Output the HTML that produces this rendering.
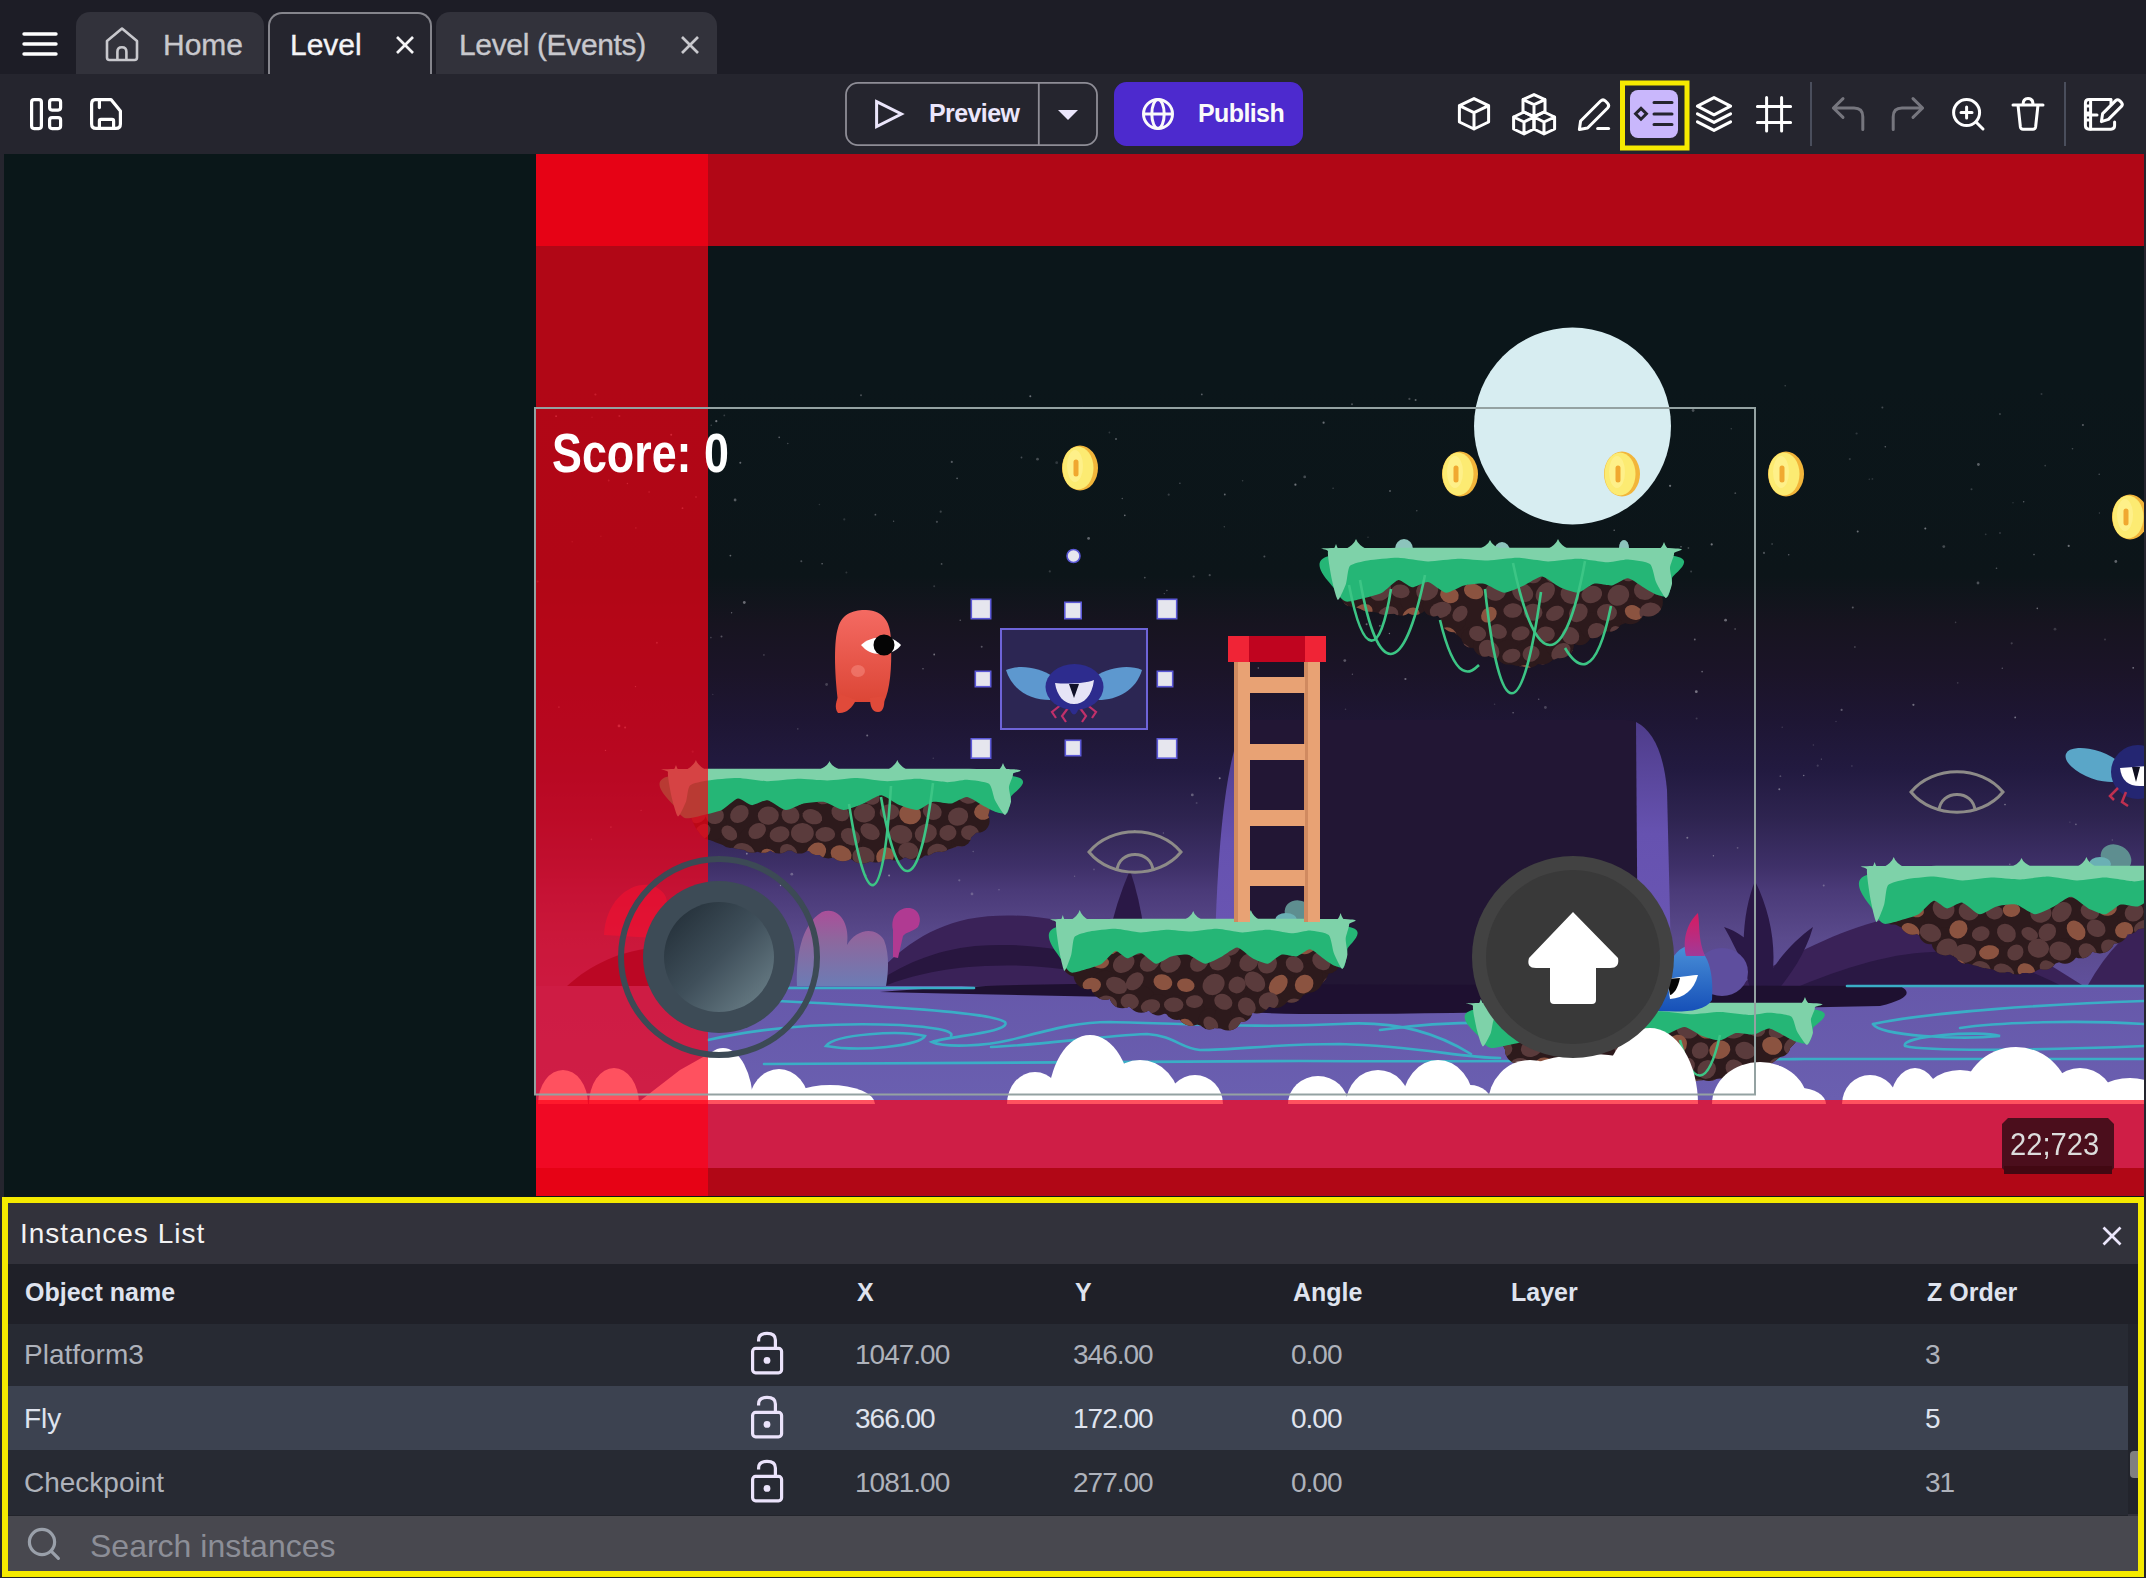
<!DOCTYPE html>
<html><head><meta charset="utf-8">
<style>
*{margin:0;padding:0;box-sizing:border-box}
html,body{width:2146px;height:1578px;overflow:hidden;background:#25252e;font-family:"Liberation Sans",sans-serif}
.a{position:absolute}
#tabbar{left:0;top:0;width:2146px;height:74px;background:#1d1d26}
.tab{position:absolute;top:12px;height:62px;background:#32323b;border-radius:14px 14px 0 0}
.tabt{position:absolute;font-size:30px;color:#c8c8cd;white-space:nowrap;line-height:1;-webkit-text-stroke:0.35px currentColor}
#toolbar{left:0;top:74px;width:2146px;height:80px;background:#25252e}
#scene{left:4px;top:154px;width:2140px;height:1043px;background:#0a1719;overflow:hidden}
#panel{left:2px;top:1197px;width:2142px;height:380px;border:6px solid #f5ea00;background:#32323b}
.ptxt{position:absolute;white-space:nowrap;line-height:1}
</style></head><body>
<!-- TAB BAR -->
<div id="tabbar" class="a">
  <svg class="a" style="left:0;top:0" width="80" height="74"><g stroke="#fff" stroke-width="3.4" stroke-linecap="round"><line x1="24" y1="34" x2="56" y2="34"/><line x1="24" y1="44" x2="56" y2="44"/><line x1="24" y1="54" x2="56" y2="54"/></g></svg>
  <div class="tab" style="left:76px;width:188px"></div>
  <div class="tab" style="left:268px;width:164px;background:#25252e;border:2px solid #85858c;border-bottom:none"></div>
  <div class="tab" style="left:436px;width:281px"></div>
  <svg class="a" style="left:100px;top:22px" width="44" height="44" viewBox="0 0 44 44"><path d="M22 6.5 L37 19 V35.5 Q37 38 34.5 38 H9.5 Q7 38 7 35.5 V19 Z M17.4 38 V29.8 Q17.4 25.2 21.9 25.2 Q26.4 25.2 26.4 29.8 V38" fill="none" stroke="#c8c8cd" stroke-width="2.6" stroke-linejoin="round"/></svg>
  <div class="tabt" style="left:163px;top:30px">Home</div>
  <div class="tabt" style="left:290px;top:30px;color:#f4f4f6">Level</div>
  <svg class="a" style="left:396px;top:36px" width="18" height="18"><g stroke="#f4f4f6" stroke-width="2.6"><line x1="1" y1="1" x2="17" y2="17"/><line x1="17" y1="1" x2="1" y2="17"/></g></svg>
  <div class="tabt" style="left:459px;top:30px;letter-spacing:-0.35px">Level (Events)</div>
  <svg class="a" style="left:681px;top:36px" width="18" height="18"><g stroke="#c8c8cd" stroke-width="2.6"><line x1="1" y1="1" x2="17" y2="17"/><line x1="17" y1="1" x2="1" y2="17"/></g></svg>
</div>
<!-- TOOLBAR -->
<div id="toolbar" class="a">
  <svg class="a" style="left:0;top:0" width="2146" height="80" viewBox="0 74 2146 80">
   <g fill="none" stroke="#fff" stroke-width="3.2" stroke-linejoin="round" stroke-linecap="round">
    <!-- layout -->
    <rect x="31.6" y="99.6" width="9.8" height="29" rx="2.5"/>
    <rect x="49.6" y="99.6" width="11" height="10.5" rx="2.5"/>
    <rect x="49.6" y="117.6" width="11" height="11" rx="2.5"/>
    <!-- save -->
    <path d="M95 99.6 H111 L120.4 111 V124 Q120.4 128.4 116 128.4 H96 Q91.6 128.4 91.6 124 V104 Q91.6 99.6 95 99.6 Z"/>
    <path d="M99.4 100 V107.6"/>
    <path d="M99.4 128 V121 Q99.4 119.4 101 119.4 H112 Q113.6 119.4 113.6 121 V128"/>
   </g>
   <!-- preview button -->
   <rect x="846" y="82.8" width="251" height="62.4" rx="12" fill="none" stroke="#8e8d96" stroke-width="1.8"/>
   <line x1="1038.8" y1="83" x2="1038.8" y2="145" stroke="#8e8d96" stroke-width="1.8"/>
   <path d="M876.6 101.6 L901.4 114 L876.6 126.6 Z" fill="none" stroke="#ebe6fb" stroke-width="3" stroke-linejoin="miter"/>
   <path d="M1058 110 H1078 L1068 120 Z" fill="#ebe6fb"/>
   <!-- publish -->
   <rect x="1114" y="82" width="189" height="64" rx="12.5" fill="#4d2ace"/>
   <g fill="none" stroke="#fafafa" stroke-width="3">
    <circle cx="1158" cy="114" r="14.5"/>
    <ellipse cx="1158" cy="114" rx="6.2" ry="14.5"/>
    <line x1="1143.5" y1="114" x2="1172.5" y2="114"/>
   </g>
   <!-- right icons -->
   <g fill="none" stroke="#fff" stroke-width="3" stroke-linejoin="round" stroke-linecap="round">
    <!-- cube -->
    <path d="M1474 98.6 L1488.6 105.6 V122 L1474 129 L1459.4 122 V105.6 Z M1459.4 105.6 L1474 112.6 L1488.6 105.6 M1474 112.6 V129"/>
    <!-- cubes -->
    <path d="M1534 94.6 L1545 99.6 V111.6 L1534 116.6 L1523 111.6 V99.6 Z M1523 99.6 L1534 104.6 L1545 99.6 M1534 104.6 V116.6"/>
    <path d="M1524 112 L1534 117 V129 L1524 134 L1513.6 129 V117 Z M1513.6 117 L1524 122 L1534 117 M1524 122 V133.6"/>
    <path d="M1544 112 L1554.6 117 V129 L1544 134 L1534 129 V117 Z M1534 117 L1544 122 L1554.6 117 M1544 122 V133.6"/>
    <!-- pencil -->
    <path d="M1579.4 129.4 L1580.6 121 L1600.6 101 Q1603 98.8 1605.4 101 L1607.6 103.2 Q1609.8 105.6 1607.6 108 L1587.6 128 Z"/>
    <line x1="1597.6" y1="128.4" x2="1608.6" y2="128.4"/>
    <!-- layers -->
    <path d="M1714 97.6 L1730.6 106.2 L1714 114.8 L1697.4 106.2 Z"/>
    <path d="M1697.4 113.8 L1714 122.4 L1730.6 113.8"/>
    <path d="M1697.4 121.8 L1714 130.4 L1730.6 121.8"/>
    <!-- grid -->
    <path d="M1766.6 97.6 V131 M1781.6 97.6 V131 M1757.4 106.4 V106.4 M1757.4 106.4 H1790.6 M1757.4 122.4 H1790.6"/>
    <!-- zoom -->
    <circle cx="1966.6" cy="112.6" r="13"/>
    <path d="M1976 122 L1983 129 M1961 112.6 H1972 M1966.6 107 V118"/>
    <!-- trash -->
    <path d="M2013 105 H2043 M2018 105 L2020.4 127 Q2020.8 129.2 2023 129.2 H2033 Q2035.2 129.2 2035.6 127 L2038 105 M2023 104.6 Q2023 98.4 2028 98.4 Q2033 98.4 2033 104.6"/>
    <!-- edit -->
    <path d="M2110.6 99.4 H2089 Q2085.4 99.4 2085.4 103 V125.6 Q2085.4 129.2 2089 129.2 H2111 Q2114.6 129.2 2114.6 125.6 V122"/>
    <path d="M2090.6 99.6 V129 M2085.6 106 H2090.6 M2085.6 113 H2090.6 M2085.6 120 H2090.6 M2086 115 H2097 M2111 99.6 V104"/>
    <path d="M2101.4 121.6 L2102.6 113.6 L2115.6 100.6 Q2117.6 98.8 2119.6 100.6 L2121.4 102.4 Q2123.2 104.4 2121.4 106.4 L2108.4 119.4 Z"/>
   </g>
   <!-- highlight -->
   <rect x="1630" y="90" width="48" height="48" rx="8" fill="#c9b7fc"/>
   <rect x="1622.5" y="83" width="64.5" height="65" fill="none" stroke="#f6ea00" stroke-width="5"/>
   <g fill="none" stroke="#25252e" stroke-width="3" stroke-linecap="round">
    <path d="M1641 108.4 L1646.4 113.8 L1641 119.2 L1635.6 113.8 Z" stroke-linejoin="miter"/>
    <path d="M1654 102.6 H1672 M1654 114 H1672 M1654 124.6 H1672"/>
   </g>
   <!-- separators -->
   <rect x="1810" y="82" width="2" height="64" fill="#4a4e5c"/>
   <rect x="2064" y="82" width="2" height="64" fill="#4a4e5c"/>
   <g fill="none" stroke="#76767e" stroke-width="3" stroke-linecap="round" stroke-linejoin="round">
    <path d="M1843 98.6 L1833.4 108 L1843 117.4 M1833.4 108 H1854 Q1862.8 108 1862.8 116.8 V129.4"/>
    <path d="M1913 98.6 L1922.6 108 L1913 117.4 M1922.6 108 H1902 Q1893.2 108 1893.2 116.8 V129.4"/>
   </g>
  </svg>
  <div class="ptxt" style="left:929px;top:27px;font-size:25px;letter-spacing:-0.6px;font-weight:bold;color:#ebe6fb">Preview</div>
  <div class="ptxt" style="left:1198px;top:27px;font-size:25px;letter-spacing:-0.6px;font-weight:bold;color:#fafafa">Publish</div>
</div>
<!-- SCENE -->
<div id="scene" class="a">
<svg class="a" style="left:0;top:0" width="2140" height="1043" viewBox="4 154 2140 1043">
<defs>
<linearGradient id="sky" x1="0" y1="385" x2="0" y2="1000" gradientUnits="userSpaceOnUse">
 <stop offset="0" stop-color="#0b161a"/>
 <stop offset="0.31" stop-color="#0c1519"/>
 <stop offset="0.39" stop-color="#171420"/>
 <stop offset="0.468" stop-color="#1b1428"/>
 <stop offset="0.548" stop-color="#1e1634"/>
 <stop offset="0.626" stop-color="#221a40"/>
 <stop offset="0.704" stop-color="#2e2450"/>
 <stop offset="0.782" stop-color="#3e3068"/>
 <stop offset="0.821" stop-color="#4a3a78"/>
 <stop offset="0.899" stop-color="#5a4a8c"/>
 <stop offset="1" stop-color="#6252a0"/>
</linearGradient>
<linearGradient id="water" x1="0" y1="986" x2="0" y2="1100" gradientUnits="userSpaceOnUse">
 <stop offset="0" stop-color="#6658aa"/><stop offset="1" stop-color="#6a5fb0"/>
</linearGradient>
<linearGradient id="joy" x1="0" y1="0" x2="1" y2="1">
 <stop offset="0" stop-color="#1f2a33"/><stop offset="0.5" stop-color="#3f4f5a"/><stop offset="1" stop-color="#70858e"/>
</linearGradient>
<linearGradient id="wf" x1="0" y1="0" x2="0" y2="1">
 <stop offset="0" stop-color="#4e3c8a"/><stop offset="0.4" stop-color="#6652b0"/><stop offset="1" stop-color="#6c58b4"/>
</linearGradient>
</defs>
<rect x="4" y="154" width="2140" height="1043" fill="#0a1719"/>
<rect x="536" y="246" width="1608" height="950" fill="#0b161a"/>
<rect x="536" y="385" width="1608" height="620" fill="url(#sky)"/>
<g fill="#c8c8d0"><circle cx="1056.7" cy="462.7" r="1.4" fill-opacity="0.20"/><circle cx="1856.6" cy="433.5" r="1.1" fill-opacity="0.20"/><circle cx="1352.0" cy="404.3" r="1.0" fill-opacity="0.33"/><circle cx="923.0" cy="668.8" r="0.7" fill-opacity="0.49"/><circle cx="735.1" cy="500.0" r="1.4" fill-opacity="0.40"/><circle cx="635.5" cy="686.6" r="0.7" fill-opacity="0.54"/><circle cx="610.9" cy="827.1" r="0.9" fill-opacity="0.34"/><circle cx="1405.4" cy="679.0" r="1.1" fill-opacity="0.48"/><circle cx="826.6" cy="684.5" r="1.4" fill-opacity="0.25"/><circle cx="692.7" cy="751.7" r="1.1" fill-opacity="0.20"/><circle cx="867.2" cy="735.4" r="1.0" fill-opacity="0.47"/><circle cx="1284.7" cy="860.6" r="0.9" fill-opacity="0.29"/><circle cx="1813.4" cy="745.0" r="0.8" fill-opacity="0.21"/><circle cx="1018.8" cy="640.0" r="0.9" fill-opacity="0.45"/><circle cx="999.0" cy="889.8" r="0.7" fill-opacity="0.37"/><circle cx="801.3" cy="561.2" r="1.0" fill-opacity="0.34"/><circle cx="2082.9" cy="425.0" r="1.1" fill-opacity="0.39"/><circle cx="1943.8" cy="546.6" r="1.4" fill-opacity="0.31"/><circle cx="1334.7" cy="795.4" r="0.7" fill-opacity="0.49"/><circle cx="2055.0" cy="629.2" r="1.4" fill-opacity="0.20"/><circle cx="1711.7" cy="544.4" r="1.1" fill-opacity="0.55"/><circle cx="1857.7" cy="531.6" r="1.0" fill-opacity="0.51"/><circle cx="1094.0" cy="869.4" r="0.9" fill-opacity="0.24"/><circle cx="724.3" cy="415.4" r="0.9" fill-opacity="0.23"/><circle cx="934.2" cy="586.3" r="1.0" fill-opacity="0.21"/><circle cx="1258.3" cy="668.0" r="0.8" fill-opacity="0.48"/><circle cx="1925.3" cy="528.4" r="1.0" fill-opacity="0.54"/><circle cx="1633.8" cy="580.9" r="0.8" fill-opacity="0.24"/><circle cx="819.4" cy="504.5" r="0.8" fill-opacity="0.18"/><circle cx="1872.4" cy="478.9" r="0.9" fill-opacity="0.18"/><circle cx="1209.7" cy="575.2" r="1.1" fill-opacity="0.30"/><circle cx="737.8" cy="827.5" r="1.1" fill-opacity="0.42"/><circle cx="1725.6" cy="620.2" r="1.4" fill-opacity="0.48"/><circle cx="1166.9" cy="590.5" r="0.7" fill-opacity="0.36"/><circle cx="1179.9" cy="483.2" r="0.8" fill-opacity="0.34"/><circle cx="712.8" cy="694.4" r="0.7" fill-opacity="0.18"/><circle cx="779.2" cy="437.3" r="0.9" fill-opacity="0.41"/><circle cx="649.1" cy="492.1" r="1.0" fill-opacity="0.23"/><circle cx="941.6" cy="563.9" r="0.9" fill-opacity="0.36"/><circle cx="721.5" cy="636.4" r="1.0" fill-opacity="0.36"/><circle cx="1037.5" cy="459.2" r="1.4" fill-opacity="0.31"/><circle cx="961.7" cy="811.9" r="0.8" fill-opacity="0.37"/><circle cx="866.0" cy="875.3" r="0.9" fill-opacity="0.23"/><circle cx="1409.4" cy="398.9" r="1.1" fill-opacity="0.29"/><circle cx="1569.8" cy="431.9" r="0.9" fill-opacity="0.37"/><circle cx="1996.5" cy="568.2" r="0.8" fill-opacity="0.38"/><circle cx="1788.7" cy="554.8" r="0.8" fill-opacity="0.41"/><circle cx="1803.7" cy="775.5" r="0.8" fill-opacity="0.48"/><circle cx="1851.9" cy="766.0" r="0.8" fill-opacity="0.25"/><circle cx="1328.4" cy="761.5" r="0.7" fill-opacity="0.47"/><circle cx="1295.4" cy="484.7" r="1.1" fill-opacity="0.53"/><circle cx="1255.1" cy="867.6" r="0.9" fill-opacity="0.53"/><circle cx="1122.3" cy="498.5" r="0.8" fill-opacity="0.35"/><circle cx="1079.1" cy="633.6" r="1.1" fill-opacity="0.49"/><circle cx="1307.0" cy="721.3" r="1.4" fill-opacity="0.21"/><circle cx="1598.2" cy="853.5" r="1.4" fill-opacity="0.46"/><circle cx="1304.7" cy="476.9" r="1.4" fill-opacity="0.30"/><circle cx="1823.7" cy="885.4" r="1.0" fill-opacity="0.35"/><circle cx="1731.3" cy="428.7" r="0.8" fill-opacity="0.24"/><circle cx="740.3" cy="462.8" r="1.0" fill-opacity="0.48"/><circle cx="771.0" cy="810.7" r="1.0" fill-opacity="0.42"/><circle cx="1099.5" cy="667.6" r="0.8" fill-opacity="0.19"/><circle cx="1821.4" cy="759.1" r="0.7" fill-opacity="0.37"/><circle cx="2037.3" cy="608.4" r="0.8" fill-opacity="0.49"/><circle cx="875.4" cy="514.7" r="0.9" fill-opacity="0.37"/><circle cx="1764.0" cy="552.9" r="1.1" fill-opacity="0.34"/><circle cx="746.8" cy="853.7" r="0.9" fill-opacity="0.51"/><circle cx="1601.3" cy="804.7" r="1.1" fill-opacity="0.34"/><circle cx="2011.7" cy="643.3" r="1.1" fill-opacity="0.24"/><circle cx="1357.0" cy="834.5" r="0.8" fill-opacity="0.41"/><circle cx="1783.9" cy="462.1" r="0.8" fill-opacity="0.36"/><circle cx="1702.1" cy="671.6" r="0.9" fill-opacity="0.43"/><circle cx="1389.4" cy="633.5" r="0.7" fill-opacity="0.51"/><circle cx="627.4" cy="483.5" r="0.7" fill-opacity="0.47"/><circle cx="1352.4" cy="674.3" r="0.7" fill-opacity="0.34"/><circle cx="1520.9" cy="645.4" r="1.1" fill-opacity="0.25"/><circle cx="981.7" cy="646.7" r="1.0" fill-opacity="0.37"/><circle cx="934.2" cy="654.5" r="0.9" fill-opacity="0.52"/><circle cx="1971.5" cy="489.3" r="1.0" fill-opacity="0.23"/><circle cx="731.6" cy="612.7" r="0.7" fill-opacity="0.43"/><circle cx="1224.8" cy="494.5" r="0.9" fill-opacity="0.47"/><circle cx="1978.4" cy="464.5" r="1.4" fill-opacity="0.42"/><circle cx="1124.8" cy="515.4" r="0.8" fill-opacity="0.54"/><circle cx="889.1" cy="875.5" r="1.0" fill-opacity="0.51"/><circle cx="797.8" cy="728.9" r="0.8" fill-opacity="0.24"/><circle cx="1229.9" cy="650.5" r="0.9" fill-opacity="0.34"/><circle cx="1109.4" cy="432.5" r="0.9" fill-opacity="0.19"/><circle cx="1426.9" cy="611.8" r="0.7" fill-opacity="0.32"/><circle cx="1368.0" cy="537.2" r="0.7" fill-opacity="0.22"/><circle cx="2013.0" cy="502.7" r="0.7" fill-opacity="0.21"/><circle cx="973.2" cy="851.5" r="0.8" fill-opacity="0.28"/><circle cx="744.3" cy="602.5" r="1.4" fill-opacity="0.48"/><circle cx="951.8" cy="461.9" r="1.1" fill-opacity="0.39"/><circle cx="1662.3" cy="431.1" r="0.7" fill-opacity="0.48"/><circle cx="830.8" cy="846.1" r="0.9" fill-opacity="0.53"/><circle cx="1556.2" cy="797.8" r="0.7" fill-opacity="0.41"/><circle cx="893.6" cy="521.2" r="0.7" fill-opacity="0.35"/><circle cx="1081.4" cy="669.8" r="0.9" fill-opacity="0.41"/><circle cx="605.5" cy="750.4" r="0.7" fill-opacity="0.54"/><circle cx="957.1" cy="478.3" r="0.9" fill-opacity="0.41"/><circle cx="1390.0" cy="491.0" r="1.0" fill-opacity="0.37"/><circle cx="822.1" cy="563.7" r="0.7" fill-opacity="0.55"/><circle cx="595.4" cy="394.5" r="1.1" fill-opacity="0.38"/><circle cx="840.6" cy="629.5" r="1.0" fill-opacity="0.22"/><circle cx="1852.8" cy="607.6" r="1.0" fill-opacity="0.38"/><circle cx="1965.1" cy="884.7" r="0.9" fill-opacity="0.43"/><circle cx="2115.8" cy="561.5" r="1.4" fill-opacity="0.45"/><circle cx="760.7" cy="894.6" r="0.7" fill-opacity="0.49"/><circle cx="558.9" cy="707.1" r="0.9" fill-opacity="0.34"/><circle cx="625.1" cy="727.6" r="1.0" fill-opacity="0.50"/><circle cx="1614.2" cy="530.2" r="0.8" fill-opacity="0.44"/><circle cx="608.7" cy="480.5" r="0.9" fill-opacity="0.34"/><circle cx="959.3" cy="880.3" r="1.1" fill-opacity="0.30"/><circle cx="591.4" cy="839.4" r="0.8" fill-opacity="0.31"/><circle cx="537.7" cy="581.5" r="1.0" fill-opacity="0.28"/><circle cx="1590.9" cy="512.8" r="0.7" fill-opacity="0.21"/><circle cx="1849.8" cy="459.1" r="1.1" fill-opacity="0.20"/><circle cx="572.2" cy="541.7" r="0.8" fill-opacity="0.21"/><circle cx="2075.9" cy="824.4" r="0.8" fill-opacity="0.42"/><circle cx="1687.3" cy="837.7" r="1.0" fill-opacity="0.46"/><circle cx="1694.8" cy="639.5" r="0.9" fill-opacity="0.45"/><circle cx="1570.3" cy="407.6" r="1.4" fill-opacity="0.51"/><circle cx="1544.8" cy="762.9" r="1.1" fill-opacity="0.23"/><circle cx="1378.2" cy="644.8" r="0.7" fill-opacity="0.49"/><circle cx="1475.2" cy="844.8" r="1.4" fill-opacity="0.53"/><circle cx="1569.8" cy="428.8" r="0.7" fill-opacity="0.23"/><circle cx="1116.0" cy="439.0" r="1.0" fill-opacity="0.39"/><circle cx="1545.4" cy="707.5" r="1.4" fill-opacity="0.27"/><circle cx="960.2" cy="620.3" r="0.7" fill-opacity="0.46"/><circle cx="1344.8" cy="660.6" r="1.4" fill-opacity="0.37"/><circle cx="1735.1" cy="629.0" r="0.7" fill-opacity="0.49"/><circle cx="913.5" cy="774.6" r="0.8" fill-opacity="0.45"/><circle cx="2105.0" cy="639.4" r="1.0" fill-opacity="0.21"/><circle cx="2000.0" cy="533.0" r="0.7" fill-opacity="0.41"/><circle cx="1569.6" cy="424.9" r="0.8" fill-opacity="0.30"/><circle cx="1583.7" cy="741.8" r="1.1" fill-opacity="0.39"/><circle cx="556.1" cy="416.2" r="0.9" fill-opacity="0.54"/><circle cx="696.0" cy="497.1" r="1.0" fill-opacity="0.29"/><circle cx="1366.6" cy="624.3" r="1.0" fill-opacity="0.46"/><circle cx="2133.2" cy="667.8" r="0.9" fill-opacity="0.54"/><circle cx="2041.5" cy="394.0" r="1.0" fill-opacity="0.21"/><circle cx="1350.6" cy="897.2" r="0.9" fill-opacity="0.32"/><circle cx="2009.8" cy="864.2" r="0.7" fill-opacity="0.40"/><circle cx="763.9" cy="654.9" r="0.9" fill-opacity="0.23"/><circle cx="1854.9" cy="647.0" r="0.7" fill-opacity="0.44"/><circle cx="908.1" cy="847.3" r="1.0" fill-opacity="0.33"/><circle cx="791.8" cy="874.2" r="1.4" fill-opacity="0.35"/><circle cx="1021.5" cy="457.5" r="0.9" fill-opacity="0.32"/><circle cx="730.4" cy="555.6" r="0.9" fill-opacity="0.46"/><circle cx="1885.3" cy="446.8" r="0.8" fill-opacity="0.44"/><circle cx="1985.7" cy="534.3" r="0.9" fill-opacity="0.20"/><circle cx="1163.4" cy="833.0" r="0.7" fill-opacity="0.31"/><circle cx="1224.3" cy="526.7" r="0.7" fill-opacity="0.28"/><circle cx="619.0" cy="725.9" r="1.4" fill-opacity="0.53"/><circle cx="936.9" cy="521.8" r="1.1" fill-opacity="0.30"/><circle cx="1779.3" cy="789.3" r="1.0" fill-opacity="0.51"/><circle cx="1841.6" cy="709.9" r="1.1" fill-opacity="0.38"/><circle cx="1693.1" cy="410.5" r="1.4" fill-opacity="0.33"/><circle cx="1524.8" cy="456.4" r="0.9" fill-opacity="0.36"/><circle cx="2002.3" cy="668.3" r="0.8" fill-opacity="0.35"/><circle cx="1088.6" cy="538.4" r="1.4" fill-opacity="0.45"/><circle cx="1585.7" cy="594.2" r="0.8" fill-opacity="0.29"/><circle cx="1432.2" cy="588.1" r="0.8" fill-opacity="0.42"/><circle cx="656.9" cy="642.8" r="1.0" fill-opacity="0.38"/><circle cx="1264.4" cy="556.4" r="1.0" fill-opacity="0.34"/><circle cx="1416.8" cy="510.7" r="0.8" fill-opacity="0.31"/><circle cx="682.5" cy="508.2" r="0.9" fill-opacity="0.48"/><circle cx="861.0" cy="395.3" r="1.0" fill-opacity="0.32"/><circle cx="1735.3" cy="493.2" r="0.9" fill-opacity="0.31"/><circle cx="635.8" cy="527.9" r="0.9" fill-opacity="0.23"/><circle cx="1345.5" cy="709.3" r="0.8" fill-opacity="0.21"/><circle cx="1978.0" cy="583.0" r="1.4" fill-opacity="0.34"/><circle cx="2069.9" cy="822.1" r="0.7" fill-opacity="0.23"/><circle cx="1219.7" cy="778.3" r="1.0" fill-opacity="0.54"/><circle cx="1323.6" cy="422.7" r="1.1" fill-opacity="0.50"/><circle cx="2099.4" cy="513.0" r="0.7" fill-opacity="0.26"/><circle cx="780.5" cy="885.5" r="0.7" fill-opacity="0.53"/><circle cx="1696.6" cy="718.4" r="1.0" fill-opacity="0.21"/><circle cx="1785.2" cy="385.7" r="0.8" fill-opacity="0.27"/><circle cx="2015.2" cy="717.4" r="0.9" fill-opacity="0.54"/><circle cx="1543.4" cy="657.1" r="1.0" fill-opacity="0.44"/><circle cx="716.3" cy="421.2" r="1.1" fill-opacity="0.53"/><circle cx="844.3" cy="519.4" r="1.1" fill-opacity="0.18"/><circle cx="1400.3" cy="898.1" r="0.9" fill-opacity="0.53"/><circle cx="1572.5" cy="840.1" r="1.0" fill-opacity="0.37"/><circle cx="1415.6" cy="400.1" r="1.0" fill-opacity="0.44"/><circle cx="1030.3" cy="396.2" r="1.0" fill-opacity="0.51"/><circle cx="1576.6" cy="426.8" r="0.8" fill-opacity="0.43"/><circle cx="2023.7" cy="501.8" r="0.7" fill-opacity="0.44"/><circle cx="1691.1" cy="571.6" r="1.0" fill-opacity="0.25"/><circle cx="1817.7" cy="765.7" r="1.1" fill-opacity="0.20"/><circle cx="1333.1" cy="488.2" r="0.8" fill-opacity="0.27"/><circle cx="892.1" cy="776.6" r="0.9" fill-opacity="0.22"/><circle cx="1538.7" cy="699.2" r="0.8" fill-opacity="0.36"/><circle cx="1999.9" cy="414.1" r="1.1" fill-opacity="0.23"/><circle cx="1168.7" cy="494.7" r="1.1" fill-opacity="0.23"/><circle cx="619.4" cy="416.0" r="1.0" fill-opacity="0.35"/><circle cx="1681.0" cy="546.8" r="0.7" fill-opacity="0.55"/><circle cx="2034.0" cy="554.6" r="0.8" fill-opacity="0.42"/><circle cx="1379.9" cy="625.8" r="0.9" fill-opacity="0.43"/><circle cx="1144.8" cy="577.6" r="0.9" fill-opacity="0.34"/><circle cx="711.2" cy="425.3" r="0.7" fill-opacity="0.31"/><circle cx="2072.5" cy="448.7" r="0.8" fill-opacity="0.32"/><circle cx="1772.1" cy="544.0" r="1.0" fill-opacity="0.21"/><circle cx="1670.1" cy="485.8" r="1.1" fill-opacity="0.52"/><circle cx="846.4" cy="572.6" r="1.0" fill-opacity="0.19"/><circle cx="1196.6" cy="803.1" r="1.0" fill-opacity="0.20"/><circle cx="592.0" cy="417.2" r="0.7" fill-opacity="0.28"/><circle cx="1737.6" cy="847.8" r="0.9" fill-opacity="0.31"/><circle cx="1074.6" cy="876.2" r="0.7" fill-opacity="0.28"/><circle cx="1688.4" cy="548.0" r="0.9" fill-opacity="0.29"/><circle cx="1696.3" cy="691.7" r="1.4" fill-opacity="0.53"/><circle cx="641.1" cy="810.4" r="0.7" fill-opacity="0.36"/><circle cx="2074.5" cy="876.3" r="1.0" fill-opacity="0.47"/><circle cx="2005.0" cy="804.6" r="0.8" fill-opacity="0.52"/><circle cx="830.2" cy="798.3" r="1.4" fill-opacity="0.29"/><circle cx="1648.9" cy="462.9" r="0.8" fill-opacity="0.30"/><circle cx="1049.8" cy="571.4" r="1.1" fill-opacity="0.21"/><circle cx="853.3" cy="772.7" r="0.8" fill-opacity="0.33"/><circle cx="1580.5" cy="633.1" r="1.1" fill-opacity="0.30"/><circle cx="2112.3" cy="840.0" r="0.7" fill-opacity="0.28"/><circle cx="671.2" cy="434.7" r="1.0" fill-opacity="0.55"/><circle cx="2099.2" cy="474.2" r="0.8" fill-opacity="0.33"/><circle cx="1533.5" cy="732.2" r="1.4" fill-opacity="0.38"/><circle cx="1780.4" cy="776.2" r="0.9" fill-opacity="0.29"/><circle cx="1447.5" cy="577.1" r="1.4" fill-opacity="0.28"/><circle cx="1242.6" cy="480.7" r="0.8" fill-opacity="0.24"/><circle cx="1957.7" cy="682.8" r="0.9" fill-opacity="0.20"/><circle cx="940.7" cy="511.7" r="1.1" fill-opacity="0.27"/><circle cx="1836.0" cy="721.5" r="0.7" fill-opacity="0.22"/><circle cx="1299.4" cy="806.8" r="1.0" fill-opacity="0.52"/><circle cx="600.9" cy="536.2" r="0.7" fill-opacity="0.20"/><circle cx="1501.6" cy="811.4" r="0.8" fill-opacity="0.52"/><circle cx="1134.6" cy="831.1" r="1.0" fill-opacity="0.40"/><circle cx="1782.2" cy="727.3" r="0.7" fill-opacity="0.22"/><circle cx="1494.6" cy="704.3" r="0.8" fill-opacity="0.19"/><circle cx="1082.7" cy="407.7" r="0.9" fill-opacity="0.19"/><circle cx="1713.4" cy="855.7" r="0.7" fill-opacity="0.48"/><circle cx="1193.7" cy="576.5" r="1.1" fill-opacity="0.30"/><circle cx="863.1" cy="794.6" r="1.1" fill-opacity="0.36"/><circle cx="1192.3" cy="794.9" r="1.4" fill-opacity="0.38"/><circle cx="1563.8" cy="431.9" r="0.8" fill-opacity="0.33"/><circle cx="972.0" cy="893.9" r="1.4" fill-opacity="0.29"/><circle cx="2068.7" cy="545.9" r="1.1" fill-opacity="0.51"/><circle cx="1201.8" cy="394.4" r="0.9" fill-opacity="0.42"/><circle cx="1164.3" cy="593.6" r="0.7" fill-opacity="0.34"/><circle cx="787.8" cy="443.5" r="0.7" fill-opacity="0.33"/><circle cx="1955.6" cy="622.4" r="0.8" fill-opacity="0.23"/><circle cx="619.1" cy="458.4" r="1.0" fill-opacity="0.21"/><circle cx="1536.5" cy="576.0" r="1.1" fill-opacity="0.24"/><circle cx="1095.5" cy="468.3" r="0.8" fill-opacity="0.52"/><circle cx="710.9" cy="637.6" r="0.8" fill-opacity="0.29"/><circle cx="1882.4" cy="407.4" r="1.0" fill-opacity="0.30"/><circle cx="1513.1" cy="712.7" r="0.7" fill-opacity="0.51"/><circle cx="1533.5" cy="809.6" r="0.8" fill-opacity="0.42"/><circle cx="1913.4" cy="704.8" r="1.1" fill-opacity="0.49"/><circle cx="1869.3" cy="479.2" r="0.8" fill-opacity="0.20"/><circle cx="2045.2" cy="465.6" r="0.9" fill-opacity="0.23"/><circle cx="933.3" cy="758.3" r="0.8" fill-opacity="0.20"/><circle cx="1440.2" cy="775.1" r="0.7" fill-opacity="0.43"/></g>
<path d="M866 988 C890 955 925 928 968 919 C1040 906 1120 930 1190 975 L1215 990 Z" fill="#3a2258"/>
<path d="M872 986 C900 965 935 950 975 946 C1050 940 1120 960 1180 990 L1150 990 C1100 972 1040 963 985 966 C940 968 905 977 880 988 Z" fill="#28163f"/>
<path d="M1108 990 Q1100 940 1130 870 Q1150 930 1145 990 Z" fill="#2a1846"/>
<path d="M1236 1000 V735 Q1236 720 1252 720 H1626 Q1642 720 1642 735 V1000 Z" fill="#221634"/>
<path d="M1214 1000 Q1216 800 1238 738 L1246 1000 Z" fill="url(#wf)"/>
<path d="M1636 722 Q1662 735 1667 790 L1672 1000 L1638 1000 Z" fill="url(#wf)"/>
<path d="M1730 990 C1800 950 1860 918 1917 915 C1970 915 2010 940 2050 965 L2090 990 Z" fill="#3a2258"/>
<path d="M1790 990 C1850 965 1900 950 1950 952 C2000 955 2040 975 2070 990 Z" fill="#2a1844"/>
<path d="M1750 988 C1738 950 1745 905 1755 881 C1772 915 1778 955 1770 988 Z M1758 988 C1740 960 1732 940 1724 927 C1750 935 1768 960 1775 988 Z M1762 988 C1775 960 1795 940 1813 927 C1805 955 1790 975 1778 990 Z" fill="#2a1846"/>
<path d="M2080 1000 Q2110 940 2144 925 V1000 Z" fill="#3a2258"/>
<linearGradient id="mush" x1="0" y1="905" x2="0" y2="986" gradientUnits="userSpaceOnUse"><stop offset="0" stop-color="#b04a98"/><stop offset="0.45" stop-color="#8c689e"/><stop offset="1" stop-color="#6c7cb4"/></linearGradient>
<g fill="url(#mush)"><path d="M797 986 C796 960 800 925 822 912 C840 906 850 925 847 945 C855 930 875 925 884 940 C890 955 888 975 886 986 Z"/></g>
<path d="M893 930 C890 915 900 907 910 908 C920 910 922 920 918 927 C912 932 906 932 903 936 L898 958 L893 957 Z" fill="#b03a92"/>
<g fill="#e6336a" fill-opacity="0.55"><path d="M604 935 C606 900 630 882 650 885 C668 890 672 905 660 915 C680 905 692 915 690 940 Z"/></g>
<path d="M567 986 C590 965 620 950 660 947 L700 947 L700 986 Z" fill="#2a1846"/>
<rect x="536" y="986" width="1608" height="182" fill="url(#water)"/>
<path d="M880 992 Q1000 982 1200 984 L1900 986 Q1920 996 1880 1006 Q1600 1012 1300 1012 Q1190 1012 1170 998 Q1000 995 880 992 Z" fill="#1e1030"/>
<path d="M1170 995 Q1180 1012 1300 1014 Q1500 1014 1600 1008 L1600 995 Z" fill="#1e1030"/>
<g fill="none" stroke="#3aaec6" stroke-width="2.6" stroke-linecap="round"><path d="M710 988 L974 988"/><path d="M778 1001 C880 1006 990 1012 1005 1022 C1012 1032 950 1036 932 1042 C945 1048 985 1046 1010 1040 C1050 1030 1075 1022 1110 1022 C1200 1024 1260 1028 1340 1024 C1400 1020 1440 1035 1471 1054"/><path d="M708 1040 C760 1028 820 1022 900 1025 C930 1027 955 1030 951 1036"/><path d="M826 1046 C835 1034 900 1030 925 1036 C920 1046 860 1052 826 1046 Z"/><path d="M991 1047 C1040 1045 1100 1036 1147 1034 C1175 1036 1180 1048 1200 1050 C1240 1050 1270 1044 1340 1044 C1420 1046 1460 1058 1500 1058"/><path d="M764 1064 C900 1062 1100 1061 1300 1061 C1500 1062 1700 1060 1805 1059 L2144 1059"/><path d="M1847 986 L2144 986"/><path d="M1873 1024 C1930 1012 2050 1004 2144 1001"/><path d="M1873 1024 C1880 1036 1960 1040 2000 1036 C1980 1030 1900 1036 1905 1046 C1930 1052 2050 1050 2144 1046"/><path d="M1960 1028 C2000 1022 2080 1020 2144 1024"/><path d="M1380 1030 C1450 1020 1520 1020 1600 1030 C1650 1038 1700 1040 1800 1038"/></g>
<g fill="#8cc4bc"><ellipse cx="1404" cy="549" rx="9" ry="10"/><ellipse cx="1502" cy="551" rx="8" ry="9"/><ellipse cx="1624" cy="548" rx="5" ry="8"/></g>
<g fill="#5e8e90"><ellipse cx="1300" cy="914" rx="16" ry="13" transform="rotate(30 1300 914)"/><ellipse cx="2116" cy="858" rx="16" ry="13" transform="rotate(30 2116 858)"/></g>
<g fill="#6ab0b4"><ellipse cx="1286" cy="920" rx="11" ry="7"/><ellipse cx="2100" cy="864" rx="11" ry="7"/></g>
<g transform="translate(1328.0 548.0)"><mask id="rc1" maskUnits="userSpaceOnUse" x="-50" y="-50" width="500" height="250"><g fill="#ffffff"><path d="M338.0 14.0 C381.2 14.0 338.3 10.5 338.0 14.0 C337.7 17.5 338.4 33.3 336.0 40.0 C333.6 46.7 326.8 58.7 320.0 64.0 C313.2 69.3 294.1 76.3 285.0 80.0 C275.9 83.7 259.3 88.0 252.0 92.0 C244.7 96.0 238.3 106.5 230.0 110.0 C221.7 113.5 201.3 119.3 190.0 118.0 C178.7 116.7 154.9 105.9 145.0 100.0 C135.1 94.1 122.0 79.1 116.0 74.0 C110.0 68.9 107.5 63.1 100.0 62.0 C92.5 60.9 70.7 66.9 60.0 66.0 C49.3 65.1 26.1 61.1 20.0 55.0 C13.9 48.9 14.8 25.5 14.0 20.0 C13.2 14.5 -29.2 14.8 14.0 14.0 C57.2 13.2 294.8 14.0 338.0 14.0 Z"/><circle cx="24.3" cy="47.7" r="11.2"/><circle cx="41.0" cy="50.8" r="13.0"/><circle cx="56.6" cy="57.0" r="10.1"/><circle cx="73.1" cy="56.6" r="11.2"/><circle cx="86.8" cy="52.7" r="14.2"/><circle cx="105.6" cy="57.6" r="10.8"/><circle cx="125.5" cy="71.7" r="12.6"/><circle cx="143.6" cy="89.6" r="10.3"/><circle cx="156.8" cy="97.2" r="11.5"/><circle cx="180.1" cy="104.2" r="12.4"/><circle cx="200.6" cy="106.2" r="13.6"/><circle cx="214.1" cy="102.6" r="14.0"/><circle cx="231.6" cy="95.9" r="14.4"/><circle cx="251.7" cy="86.2" r="11.1"/><circle cx="264.3" cy="77.2" r="13.1"/><circle cx="281.6" cy="71.9" r="11.9"/><circle cx="302.5" cy="63.4" r="12.9"/><circle cx="320.3" cy="53.9" r="14.6"/></g></mask><g fill="#2d1a1c"><path d="M338.0 14.0 C381.2 14.0 338.3 10.5 338.0 14.0 C337.7 17.5 338.4 33.3 336.0 40.0 C333.6 46.7 326.8 58.7 320.0 64.0 C313.2 69.3 294.1 76.3 285.0 80.0 C275.9 83.7 259.3 88.0 252.0 92.0 C244.7 96.0 238.3 106.5 230.0 110.0 C221.7 113.5 201.3 119.3 190.0 118.0 C178.7 116.7 154.9 105.9 145.0 100.0 C135.1 94.1 122.0 79.1 116.0 74.0 C110.0 68.9 107.5 63.1 100.0 62.0 C92.5 60.9 70.7 66.9 60.0 66.0 C49.3 65.1 26.1 61.1 20.0 55.0 C13.9 48.9 14.8 25.5 14.0 20.0 C13.2 14.5 -29.2 14.8 14.0 14.0 C57.2 13.2 294.8 14.0 338.0 14.0 Z"/><circle cx="24.3" cy="47.7" r="11.2"/><circle cx="41.0" cy="50.8" r="13.0"/><circle cx="56.6" cy="57.0" r="10.1"/><circle cx="73.1" cy="56.6" r="11.2"/><circle cx="86.8" cy="52.7" r="14.2"/><circle cx="105.6" cy="57.6" r="10.8"/><circle cx="125.5" cy="71.7" r="12.6"/><circle cx="143.6" cy="89.6" r="10.3"/><circle cx="156.8" cy="97.2" r="11.5"/><circle cx="180.1" cy="104.2" r="12.4"/><circle cx="200.6" cy="106.2" r="13.6"/><circle cx="214.1" cy="102.6" r="14.0"/><circle cx="231.6" cy="95.9" r="14.4"/><circle cx="251.7" cy="86.2" r="11.1"/><circle cx="264.3" cy="77.2" r="13.1"/><circle cx="281.6" cy="71.9" r="11.9"/><circle cx="302.5" cy="63.4" r="12.9"/><circle cx="320.3" cy="53.9" r="14.6"/></g><g mask="url(#rc1)"><ellipse cx="15.4" cy="23.0" rx="11.4" ry="10.2" fill="#5a3b3c" transform="rotate(22 15.4 23.0)"/><ellipse cx="34.8" cy="25.9" rx="11.5" ry="8.7" fill="#5a3b3c" transform="rotate(-35 34.8 25.9)"/><ellipse cx="58.5" cy="27.1" rx="8.8" ry="7.7" fill="#5a3b3c" transform="rotate(2 58.5 27.1)"/><ellipse cx="89.2" cy="22.1" rx="9.7" ry="7.1" fill="#5a3b3c" transform="rotate(27 89.2 22.1)"/><ellipse cx="110.9" cy="22.3" rx="9.5" ry="8.5" fill="#5a3b3c" transform="rotate(-15 110.9 22.3)"/><ellipse cx="134.0" cy="28.0" rx="8.7" ry="7.3" fill="#5a3b3c" transform="rotate(-46 134.0 28.0)"/><ellipse cx="161.6" cy="27.8" rx="9.3" ry="7.9" fill="#5a3b3c" transform="rotate(-7 161.6 27.8)"/><ellipse cx="180.5" cy="27.8" rx="9.6" ry="7.7" fill="#5a3b3c" transform="rotate(16 180.5 27.8)"/><ellipse cx="205.1" cy="27.2" rx="8.8" ry="8.1" fill="#5a3b3c" transform="rotate(14 205.1 27.2)"/><ellipse cx="228.2" cy="25.8" rx="11.3" ry="9.0" fill="#5a3b3c" transform="rotate(-17 228.2 25.8)"/><ellipse cx="254.2" cy="25.3" rx="9.7" ry="8.1" fill="#8b5340" transform="rotate(-48 254.2 25.3)"/><ellipse cx="277.0" cy="25.5" rx="10.4" ry="8.0" fill="#8b5340" transform="rotate(-5 277.0 25.5)"/><ellipse cx="303.4" cy="24.1" rx="10.7" ry="7.6" fill="#5a3b3c" transform="rotate(-43 303.4 24.1)"/><ellipse cx="329.6" cy="22.1" rx="10.4" ry="8.0" fill="#5a3b3c" transform="rotate(26 329.6 22.1)"/><ellipse cx="24.6" cy="44.2" rx="9.6" ry="8.0" fill="#5a3b3c" transform="rotate(-12 24.6 44.2)"/><ellipse cx="52.3" cy="42.6" rx="11.4" ry="9.7" fill="#5a3b3c" transform="rotate(-34 52.3 42.6)"/><ellipse cx="72.5" cy="43.3" rx="9.2" ry="6.8" fill="#5a3b3c" transform="rotate(5 72.5 43.3)"/><ellipse cx="99.2" cy="42.6" rx="11.3" ry="9.6" fill="#5a3b3c" transform="rotate(-22 99.2 42.6)"/><ellipse cx="121.5" cy="47.1" rx="9.5" ry="8.0" fill="#8b5340" transform="rotate(22 121.5 47.1)"/><ellipse cx="145.6" cy="43.4" rx="10.1" ry="7.5" fill="#8b5340" transform="rotate(23 145.6 43.4)"/><ellipse cx="167.5" cy="43.7" rx="10.4" ry="9.1" fill="#5a3b3c" transform="rotate(-6 167.5 43.7)"/><ellipse cx="194.7" cy="44.5" rx="11.0" ry="8.9" fill="#5a3b3c" transform="rotate(31 194.7 44.5)"/><ellipse cx="217.3" cy="44.5" rx="11.3" ry="8.3" fill="#5a3b3c" transform="rotate(-50 217.3 44.5)"/><ellipse cx="241.8" cy="47.0" rx="10.0" ry="8.3" fill="#5a3b3c" transform="rotate(41 241.8 47.0)"/><ellipse cx="263.8" cy="46.5" rx="10.5" ry="8.5" fill="#5a3b3c" transform="rotate(-14 263.8 46.5)"/><ellipse cx="290.4" cy="47.3" rx="11.1" ry="10.1" fill="#5a3b3c" transform="rotate(-35 290.4 47.3)"/><ellipse cx="316.5" cy="42.3" rx="10.6" ry="9.6" fill="#5a3b3c" transform="rotate(5 316.5 42.3)"/><ellipse cx="14.6" cy="62.1" rx="9.0" ry="6.9" fill="#5a3b3c" transform="rotate(34 14.6 62.1)"/><ellipse cx="34.2" cy="65.2" rx="11.2" ry="8.1" fill="#8b5340" transform="rotate(-34 34.2 65.2)"/><ellipse cx="60.0" cy="67.2" rx="10.8" ry="8.4" fill="#5a3b3c" transform="rotate(-25 60.0 67.2)"/><ellipse cx="83.0" cy="67.3" rx="9.2" ry="7.0" fill="#8b5340" transform="rotate(-34 83.0 67.3)"/><ellipse cx="112.6" cy="62.0" rx="11.1" ry="7.9" fill="#5a3b3c" transform="rotate(-16 112.6 62.0)"/><ellipse cx="132.0" cy="65.7" rx="8.7" ry="6.7" fill="#5a3b3c" transform="rotate(-50 132.0 65.7)"/><ellipse cx="160.9" cy="66.7" rx="8.6" ry="7.0" fill="#8b5340" transform="rotate(-46 160.9 66.7)"/><ellipse cx="184.8" cy="62.5" rx="9.4" ry="7.3" fill="#5a3b3c" transform="rotate(-6 184.8 62.5)"/><ellipse cx="205.1" cy="64.3" rx="9.3" ry="8.5" fill="#5a3b3c" transform="rotate(4 205.1 64.3)"/><ellipse cx="227.0" cy="65.3" rx="9.6" ry="6.9" fill="#5a3b3c" transform="rotate(-28 227.0 65.3)"/><ellipse cx="250.3" cy="64.8" rx="10.1" ry="8.5" fill="#5a3b3c" transform="rotate(-45 250.3 64.8)"/><ellipse cx="279.0" cy="64.6" rx="10.0" ry="8.5" fill="#5a3b3c" transform="rotate(3 279.0 64.6)"/><ellipse cx="305.6" cy="64.5" rx="9.2" ry="7.0" fill="#8b5340" transform="rotate(25 305.6 64.5)"/><ellipse cx="322.6" cy="64.5" rx="11.1" ry="10.1" fill="#5a3b3c" transform="rotate(-3 322.6 64.5)"/><ellipse cx="29.8" cy="85.4" rx="8.9" ry="7.6" fill="#5a3b3c" transform="rotate(43 29.8 85.4)"/><ellipse cx="51.3" cy="87.3" rx="10.5" ry="9.0" fill="#5a3b3c" transform="rotate(22 51.3 87.3)"/><ellipse cx="74.3" cy="86.9" rx="9.9" ry="7.5" fill="#5a3b3c" transform="rotate(-1 74.3 86.9)"/><ellipse cx="94.4" cy="82.6" rx="11.1" ry="8.2" fill="#8b5340" transform="rotate(-47 94.4 82.6)"/><ellipse cx="120.7" cy="87.1" rx="8.8" ry="7.1" fill="#8b5340" transform="rotate(39 120.7 87.1)"/><ellipse cx="149.6" cy="85.5" rx="8.6" ry="7.5" fill="#5a3b3c" transform="rotate(15 149.6 85.5)"/><ellipse cx="170.2" cy="83.4" rx="8.8" ry="7.2" fill="#5a3b3c" transform="rotate(20 170.2 83.4)"/><ellipse cx="192.6" cy="85.4" rx="9.2" ry="6.8" fill="#5a3b3c" transform="rotate(-19 192.6 85.4)"/><ellipse cx="217.6" cy="86.2" rx="9.3" ry="7.7" fill="#5a3b3c" transform="rotate(-6 217.6 86.2)"/><ellipse cx="242.5" cy="87.8" rx="9.2" ry="8.3" fill="#5a3b3c" transform="rotate(45 242.5 87.8)"/><ellipse cx="269.7" cy="84.5" rx="10.2" ry="9.2" fill="#5a3b3c" transform="rotate(37 269.7 84.5)"/><ellipse cx="289.9" cy="85.9" rx="8.9" ry="6.5" fill="#5a3b3c" transform="rotate(45 289.9 85.9)"/><ellipse cx="313.9" cy="86.2" rx="10.3" ry="9.1" fill="#5a3b3c" transform="rotate(-33 313.9 86.2)"/><ellipse cx="12.1" cy="103.2" rx="9.4" ry="7.1" fill="#5a3b3c" transform="rotate(38 12.1 103.2)"/><ellipse cx="38.3" cy="106.7" rx="11.1" ry="9.2" fill="#5a3b3c" transform="rotate(24 38.3 106.7)"/><ellipse cx="62.7" cy="103.6" rx="8.6" ry="6.9" fill="#8b5340" transform="rotate(-2 62.7 103.6)"/><ellipse cx="83.6" cy="105.4" rx="9.9" ry="8.9" fill="#8b5340" transform="rotate(3 83.6 105.4)"/><ellipse cx="113.9" cy="104.9" rx="9.9" ry="8.8" fill="#5a3b3c" transform="rotate(33 113.9 104.9)"/><ellipse cx="134.5" cy="104.9" rx="11.1" ry="8.7" fill="#5a3b3c" transform="rotate(43 134.5 104.9)"/><ellipse cx="161.1" cy="102.3" rx="11.2" ry="9.4" fill="#5a3b3c" transform="rotate(49 161.1 102.3)"/><ellipse cx="183.4" cy="107.8" rx="9.2" ry="6.8" fill="#5a3b3c" transform="rotate(-17 183.4 107.8)"/><ellipse cx="203.1" cy="105.7" rx="8.6" ry="7.8" fill="#5a3b3c" transform="rotate(-29 203.1 105.7)"/><ellipse cx="232.9" cy="103.9" rx="10.7" ry="7.7" fill="#5a3b3c" transform="rotate(-39 232.9 103.9)"/><ellipse cx="252.1" cy="107.5" rx="9.9" ry="8.5" fill="#8b5340" transform="rotate(-7 252.1 107.5)"/><ellipse cx="274.1" cy="104.0" rx="10.0" ry="7.4" fill="#5a3b3c" transform="rotate(24 274.1 104.0)"/><ellipse cx="303.9" cy="104.9" rx="9.5" ry="8.5" fill="#8b5340" transform="rotate(-41 303.9 104.9)"/><ellipse cx="327.3" cy="102.7" rx="11.2" ry="8.1" fill="#5a3b3c" transform="rotate(39 327.3 102.7)"/><ellipse cx="25.0" cy="126.6" rx="9.4" ry="8.0" fill="#5a3b3c" transform="rotate(33 25.0 126.6)"/><ellipse cx="53.6" cy="126.9" rx="11.3" ry="8.8" fill="#8b5340" transform="rotate(22 53.6 126.9)"/><ellipse cx="74.3" cy="122.7" rx="9.6" ry="8.2" fill="#5a3b3c" transform="rotate(36 74.3 122.7)"/><ellipse cx="99.8" cy="126.5" rx="10.7" ry="7.8" fill="#5a3b3c" transform="rotate(-3 99.8 126.5)"/><ellipse cx="125.1" cy="125.9" rx="11.3" ry="8.3" fill="#8b5340" transform="rotate(-8 125.1 125.9)"/><ellipse cx="147.2" cy="125.9" rx="9.4" ry="7.0" fill="#5a3b3c" transform="rotate(11 147.2 125.9)"/><ellipse cx="168.5" cy="123.1" rx="10.6" ry="9.2" fill="#8b5340" transform="rotate(19 168.5 123.1)"/><ellipse cx="194.6" cy="124.4" rx="9.3" ry="6.6" fill="#8b5340" transform="rotate(-33 194.6 124.4)"/><ellipse cx="214.3" cy="125.0" rx="10.8" ry="8.4" fill="#8b5340" transform="rotate(-8 214.3 125.0)"/><ellipse cx="245.6" cy="124.7" rx="8.7" ry="7.0" fill="#5a3b3c" transform="rotate(-36 245.6 124.7)"/><ellipse cx="263.2" cy="125.5" rx="10.2" ry="9.2" fill="#5a3b3c" transform="rotate(-36 263.2 125.5)"/><ellipse cx="287.5" cy="123.1" rx="10.7" ry="9.4" fill="#5a3b3c" transform="rotate(45 287.5 123.1)"/><ellipse cx="311.0" cy="125.6" rx="10.9" ry="8.9" fill="#5a3b3c" transform="rotate(-29 311.0 125.6)"/></g><g transform="scale(1.000 0.893)"><path d="M6.0 8.0 C39.2 4.0 306.2 5.4 340.0 8.0 C373.8 10.6 344.0 29.4 344.0 34.0 C344.0 38.6 341.6 52.2 340.0 54.0 C338.4 55.8 330.2 52.8 328.0 52.0 C325.8 51.2 320.8 47.8 318.0 46.0 C315.2 44.2 303.4 34.4 300.0 34.0 C296.6 33.6 287.4 41.4 284.0 42.0 C280.6 42.6 269.4 39.2 266.0 40.0 C262.6 40.8 253.4 49.6 250.0 50.0 C246.6 50.4 235.6 45.8 232.0 44.0 C228.4 42.2 217.6 32.2 214.0 32.0 C210.4 31.8 199.8 40.2 196.0 42.0 C192.2 43.8 180.0 50.2 176.0 50.0 C172.0 49.8 160.0 40.8 156.0 40.0 C152.0 39.2 139.8 41.0 136.0 42.0 C132.2 43.0 121.6 50.4 118.0 50.0 C114.4 49.6 103.4 38.6 100.0 38.0 C96.6 37.4 87.0 44.2 84.0 44.0 C81.0 43.8 73.0 35.4 70.0 36.0 C67.0 36.6 57.4 48.0 54.0 50.0 C50.6 52.0 39.6 55.0 36.0 56.0 C32.4 57.0 20.8 60.8 18.0 60.0 C15.2 59.2 9.2 53.2 8.0 48.0 C6.8 42.8 -27.2 12.0 6.0 8.0 Z" fill="#25b676"/><path d="M0.0 4.0 C0.8 0.4 -21.6 0.4 12.0 0.0 C45.6 -0.4 302.6 -0.6 336.0 0.0 C369.4 0.6 345.4 3.8 346.0 6.0 C346.6 8.2 342.2 18.6 342.0 22.0 C341.8 25.4 344.4 36.6 344.0 40.0 C343.6 43.4 339.6 56.2 338.0 56.0 C336.4 55.8 329.6 41.8 328.0 38.0 C326.4 34.2 324.8 20.5 322.0 18.0 C319.2 15.5 304.2 13.2 300.0 13.0 C295.8 12.8 285.0 16.1 280.0 16.0 C275.0 15.9 256.0 12.1 250.0 12.0 C244.0 11.9 226.0 15.1 220.0 15.0 C214.0 14.9 196.0 11.1 190.0 11.0 C184.0 10.9 166.0 13.9 160.0 14.0 C154.0 14.1 136.0 11.9 130.0 12.0 C124.0 12.1 106.0 15.1 100.0 15.0 C94.0 14.9 76.0 11.1 70.0 11.0 C64.0 10.9 44.8 13.1 40.0 14.0 C35.2 14.9 24.2 17.4 22.0 20.0 C19.8 22.6 19.2 36.2 18.0 40.0 C16.8 43.8 11.4 58.4 10.0 58.0 C8.6 57.6 5.0 41.4 4.0 36.0 C3.0 30.6 -0.8 7.6 0.0 4.0 Z" fill="#7ed2a9"/></g><g transform="scale(1.000 1)"><path d="M4.0 2.0 Q6.0 2.0 8.0 -4.0 Q10.0 2.0 12.0 2.0 Z" fill="#7ed2a9"/><path d="M16.0 2.0 Q26.0 -3.0 28.0 -9.0 Q30.0 -3.0 40.0 2.0 Z" fill="#7ed2a9"/><path d="M148.0 2.0 Q160.0 -2.0 162.0 -8.0 Q164.0 -2.0 176.0 2.0 Z" fill="#7ed2a9"/><path d="M218.0 2.0 Q228.0 -3.0 230.0 -9.0 Q232.0 -3.0 242.0 2.0 Z" fill="#7ed2a9"/><path d="M330.0 2.0 Q334.0 0.0 336.0 -6.0 Q338.0 0.0 342.0 2.0 Z" fill="#7ed2a9"/></g></g><g fill="none" stroke="#3cc585" stroke-width="2.6"><path d="M1349.0 585.0 C1363.4 659.2 1380.2 657.9 1391.0 589.0"/><path d="M1360.0 580.0 C1377.4 678.5 1403.4 680.3 1425.0 575.0"/><path d="M1440.0 620.0 C1456.2 687.5 1471.8 671.8 1479.0 665.0"/><path d="M1485.0 589.0 C1500.0 728.0 1522.4 727.0 1541.0 592.0"/><path d="M1513.0 563.0 C1535.8 672.4 1564.6 673.0 1585.0 561.0"/><path d="M1565.0 648.0 C1577.0 668.2 1595.4 683.0 1611.0 606.0"/></g>
<g transform="translate(668.0 769.0)"><mask id="rc2" maskUnits="userSpaceOnUse" x="-50" y="-50" width="500" height="250"><g fill="#ffffff"><path d="M326.0 14.0 C367.6 14.0 327.1 8.9 326.0 14.0 C324.9 19.1 322.8 43.6 318.0 52.0 C313.2 60.4 300.4 72.2 290.0 77.0 C279.6 81.8 253.3 86.1 240.0 88.0 C226.7 89.9 203.3 91.8 190.0 91.0 C176.7 90.2 156.0 83.5 140.0 82.0 C124.0 80.5 84.7 82.7 70.0 80.0 C55.3 77.3 37.5 70.5 30.0 62.0 C22.5 53.5 16.1 22.4 14.0 16.0 C11.9 9.6 -27.6 14.3 14.0 14.0 C55.6 13.7 284.4 14.0 326.0 14.0 Z"/><circle cx="25.5" cy="34.9" r="13.1"/><circle cx="44.2" cy="56.7" r="14.7"/><circle cx="62.1" cy="68.9" r="10.1"/><circle cx="84.4" cy="70.4" r="13.2"/><circle cx="95.1" cy="71.5" r="12.3"/><circle cx="111.0" cy="71.6" r="12.9"/><circle cx="131.7" cy="73.1" r="11.4"/><circle cx="149.6" cy="75.3" r="10.8"/><circle cx="160.4" cy="76.3" r="13.1"/><circle cx="174.9" cy="77.8" r="14.4"/><circle cx="194.2" cy="79.7" r="14.9"/><circle cx="207.9" cy="78.8" r="14.8"/><circle cx="228.4" cy="80.6" r="11.0"/><circle cx="246.2" cy="76.0" r="14.8"/><circle cx="257.7" cy="74.8" r="11.8"/><circle cx="273.4" cy="72.7" r="10.3"/><circle cx="293.2" cy="67.5" r="10.0"/><circle cx="310.1" cy="52.1" r="11.5"/></g></mask><g fill="#2d1a1c"><path d="M326.0 14.0 C367.6 14.0 327.1 8.9 326.0 14.0 C324.9 19.1 322.8 43.6 318.0 52.0 C313.2 60.4 300.4 72.2 290.0 77.0 C279.6 81.8 253.3 86.1 240.0 88.0 C226.7 89.9 203.3 91.8 190.0 91.0 C176.7 90.2 156.0 83.5 140.0 82.0 C124.0 80.5 84.7 82.7 70.0 80.0 C55.3 77.3 37.5 70.5 30.0 62.0 C22.5 53.5 16.1 22.4 14.0 16.0 C11.9 9.6 -27.6 14.3 14.0 14.0 C55.6 13.7 284.4 14.0 326.0 14.0 Z"/><circle cx="25.5" cy="34.9" r="13.1"/><circle cx="44.2" cy="56.7" r="14.7"/><circle cx="62.1" cy="68.9" r="10.1"/><circle cx="84.4" cy="70.4" r="13.2"/><circle cx="95.1" cy="71.5" r="12.3"/><circle cx="111.0" cy="71.6" r="12.9"/><circle cx="131.7" cy="73.1" r="11.4"/><circle cx="149.6" cy="75.3" r="10.8"/><circle cx="160.4" cy="76.3" r="13.1"/><circle cx="174.9" cy="77.8" r="14.4"/><circle cx="194.2" cy="79.7" r="14.9"/><circle cx="207.9" cy="78.8" r="14.8"/><circle cx="228.4" cy="80.6" r="11.0"/><circle cx="246.2" cy="76.0" r="14.8"/><circle cx="257.7" cy="74.8" r="11.8"/><circle cx="273.4" cy="72.7" r="10.3"/><circle cx="293.2" cy="67.5" r="10.0"/><circle cx="310.1" cy="52.1" r="11.5"/></g><g mask="url(#rc2)"><ellipse cx="12.5" cy="24.9" rx="8.7" ry="7.9" fill="#5a3b3c" transform="rotate(-48 12.5 24.9)"/><ellipse cx="41.6" cy="24.1" rx="10.1" ry="8.0" fill="#5a3b3c" transform="rotate(-2 41.6 24.1)"/><ellipse cx="62.6" cy="22.1" rx="9.0" ry="8.2" fill="#8b5340" transform="rotate(-25 62.6 22.1)"/><ellipse cx="83.0" cy="23.5" rx="9.9" ry="8.0" fill="#5a3b3c" transform="rotate(17 83.0 23.5)"/><ellipse cx="108.0" cy="24.8" rx="10.8" ry="8.5" fill="#5a3b3c" transform="rotate(-13 108.0 24.8)"/><ellipse cx="130.3" cy="27.7" rx="9.5" ry="7.9" fill="#8b5340" transform="rotate(-32 130.3 27.7)"/><ellipse cx="156.7" cy="27.5" rx="9.4" ry="7.3" fill="#5a3b3c" transform="rotate(-28 156.7 27.5)"/><ellipse cx="184.4" cy="25.8" rx="9.4" ry="7.6" fill="#5a3b3c" transform="rotate(42 184.4 25.8)"/><ellipse cx="202.4" cy="27.9" rx="9.7" ry="7.3" fill="#5a3b3c" transform="rotate(26 202.4 27.9)"/><ellipse cx="228.8" cy="23.5" rx="8.9" ry="8.2" fill="#5a3b3c" transform="rotate(31 228.8 23.5)"/><ellipse cx="250.3" cy="25.0" rx="8.9" ry="7.7" fill="#5a3b3c" transform="rotate(-34 250.3 25.0)"/><ellipse cx="279.0" cy="26.7" rx="9.8" ry="7.2" fill="#8b5340" transform="rotate(3 279.0 26.7)"/><ellipse cx="300.4" cy="24.7" rx="11.1" ry="10.1" fill="#5a3b3c" transform="rotate(8 300.4 24.7)"/><ellipse cx="29.7" cy="46.1" rx="9.3" ry="7.5" fill="#5a3b3c" transform="rotate(-32 29.7 46.1)"/><ellipse cx="46.9" cy="46.9" rx="9.0" ry="8.2" fill="#5a3b3c" transform="rotate(-7 46.9 46.9)"/><ellipse cx="71.4" cy="45.0" rx="10.1" ry="8.2" fill="#5a3b3c" transform="rotate(-42 71.4 45.0)"/><ellipse cx="100.3" cy="46.6" rx="10.5" ry="9.1" fill="#5a3b3c" transform="rotate(-4 100.3 46.6)"/><ellipse cx="122.5" cy="46.0" rx="9.3" ry="8.5" fill="#5a3b3c" transform="rotate(41 122.5 46.0)"/><ellipse cx="144.4" cy="47.7" rx="10.2" ry="7.2" fill="#5a3b3c" transform="rotate(20 144.4 47.7)"/><ellipse cx="172.2" cy="44.0" rx="9.4" ry="7.6" fill="#5a3b3c" transform="rotate(36 172.2 44.0)"/><ellipse cx="196.4" cy="44.1" rx="10.7" ry="9.5" fill="#5a3b3c" transform="rotate(-6 196.4 44.1)"/><ellipse cx="221.4" cy="43.0" rx="9.8" ry="7.7" fill="#5a3b3c" transform="rotate(-8 221.4 43.0)"/><ellipse cx="242.1" cy="45.2" rx="11.0" ry="10.0" fill="#8b5340" transform="rotate(11 242.1 45.2)"/><ellipse cx="264.3" cy="42.5" rx="9.7" ry="8.1" fill="#5a3b3c" transform="rotate(24 264.3 42.5)"/><ellipse cx="290.1" cy="47.6" rx="10.2" ry="9.0" fill="#5a3b3c" transform="rotate(-16 290.1 47.6)"/><ellipse cx="315.8" cy="42.2" rx="9.8" ry="8.3" fill="#8b5340" transform="rotate(-22 315.8 42.2)"/><ellipse cx="16.1" cy="63.1" rx="11.5" ry="10.5" fill="#5a3b3c" transform="rotate(-29 16.1 63.1)"/><ellipse cx="34.4" cy="62.8" rx="9.0" ry="6.7" fill="#5a3b3c" transform="rotate(-46 34.4 62.8)"/><ellipse cx="61.3" cy="64.1" rx="8.7" ry="6.5" fill="#5a3b3c" transform="rotate(41 61.3 64.1)"/><ellipse cx="89.2" cy="62.0" rx="9.3" ry="7.4" fill="#5a3b3c" transform="rotate(-36 89.2 62.0)"/><ellipse cx="111.5" cy="65.3" rx="10.1" ry="7.8" fill="#5a3b3c" transform="rotate(-13 111.5 65.3)"/><ellipse cx="134.4" cy="64.0" rx="11.4" ry="10.0" fill="#5a3b3c" transform="rotate(3 134.4 64.0)"/><ellipse cx="157.3" cy="65.4" rx="9.9" ry="7.3" fill="#5a3b3c" transform="rotate(-2 157.3 65.4)"/><ellipse cx="182.5" cy="67.7" rx="10.3" ry="8.0" fill="#5a3b3c" transform="rotate(34 182.5 67.7)"/><ellipse cx="202.0" cy="62.6" rx="10.3" ry="7.6" fill="#5a3b3c" transform="rotate(30 202.0 62.6)"/><ellipse cx="233.0" cy="65.4" rx="11.4" ry="9.2" fill="#5a3b3c" transform="rotate(11 233.0 65.4)"/><ellipse cx="257.8" cy="64.3" rx="11.2" ry="9.3" fill="#5a3b3c" transform="rotate(-17 257.8 64.3)"/><ellipse cx="279.9" cy="63.8" rx="8.6" ry="7.8" fill="#5a3b3c" transform="rotate(-11 279.9 63.8)"/><ellipse cx="301.9" cy="63.7" rx="8.9" ry="7.4" fill="#5a3b3c" transform="rotate(6 301.9 63.7)"/><ellipse cx="24.0" cy="82.2" rx="9.7" ry="7.8" fill="#8b5340" transform="rotate(21 24.0 82.2)"/><ellipse cx="48.2" cy="87.6" rx="9.2" ry="7.0" fill="#5a3b3c" transform="rotate(-31 48.2 87.6)"/><ellipse cx="75.8" cy="83.7" rx="11.5" ry="9.3" fill="#5a3b3c" transform="rotate(27 75.8 83.7)"/><ellipse cx="101.0" cy="87.4" rx="8.9" ry="6.8" fill="#8b5340" transform="rotate(40 101.0 87.4)"/><ellipse cx="120.7" cy="83.8" rx="9.9" ry="7.7" fill="#5a3b3c" transform="rotate(45 120.7 83.8)"/><ellipse cx="148.5" cy="82.8" rx="10.2" ry="8.6" fill="#8b5340" transform="rotate(-37 148.5 82.8)"/><ellipse cx="173.1" cy="85.3" rx="10.8" ry="8.6" fill="#8b5340" transform="rotate(23 173.1 85.3)"/><ellipse cx="195.5" cy="87.7" rx="11.1" ry="9.8" fill="#5a3b3c" transform="rotate(10 195.5 87.7)"/><ellipse cx="217.1" cy="87.1" rx="9.4" ry="8.3" fill="#8b5340" transform="rotate(-42 217.1 87.1)"/><ellipse cx="240.4" cy="82.0" rx="10.2" ry="8.6" fill="#5a3b3c" transform="rotate(10 240.4 82.0)"/><ellipse cx="269.3" cy="82.9" rx="10.1" ry="8.2" fill="#5a3b3c" transform="rotate(-8 269.3 82.9)"/><ellipse cx="290.3" cy="84.6" rx="8.6" ry="7.4" fill="#5a3b3c" transform="rotate(-16 290.3 84.6)"/><ellipse cx="316.6" cy="86.8" rx="8.6" ry="7.4" fill="#5a3b3c" transform="rotate(-42 316.6 86.8)"/><ellipse cx="18.0" cy="106.2" rx="11.0" ry="8.3" fill="#8b5340" transform="rotate(32 18.0 106.2)"/><ellipse cx="40.6" cy="102.7" rx="11.5" ry="9.8" fill="#5a3b3c" transform="rotate(6 40.6 102.7)"/><ellipse cx="59.2" cy="105.7" rx="9.0" ry="7.5" fill="#5a3b3c" transform="rotate(-45 59.2 105.7)"/><ellipse cx="86.4" cy="106.0" rx="9.3" ry="7.7" fill="#5a3b3c" transform="rotate(-35 86.4 106.0)"/><ellipse cx="111.9" cy="107.3" rx="9.8" ry="7.5" fill="#8b5340" transform="rotate(26 111.9 107.3)"/><ellipse cx="133.9" cy="104.1" rx="11.2" ry="8.2" fill="#5a3b3c" transform="rotate(-13 133.9 104.1)"/><ellipse cx="155.2" cy="105.8" rx="11.2" ry="9.2" fill="#5a3b3c" transform="rotate(29 155.2 105.8)"/><ellipse cx="179.8" cy="102.4" rx="11.0" ry="8.4" fill="#8b5340" transform="rotate(-33 179.8 102.4)"/><ellipse cx="208.5" cy="107.2" rx="9.7" ry="7.0" fill="#5a3b3c" transform="rotate(-48 208.5 107.2)"/><ellipse cx="231.2" cy="102.5" rx="8.8" ry="6.4" fill="#5a3b3c" transform="rotate(26 231.2 102.5)"/><ellipse cx="253.6" cy="104.3" rx="11.4" ry="8.2" fill="#5a3b3c" transform="rotate(17 253.6 104.3)"/><ellipse cx="274.2" cy="106.4" rx="9.0" ry="8.1" fill="#8b5340" transform="rotate(37 274.2 106.4)"/><ellipse cx="304.4" cy="106.5" rx="11.2" ry="9.1" fill="#8b5340" transform="rotate(-23 304.4 106.5)"/><ellipse cx="23.1" cy="125.7" rx="9.2" ry="7.1" fill="#5a3b3c" transform="rotate(28 23.1 125.7)"/><ellipse cx="51.6" cy="126.8" rx="10.7" ry="8.3" fill="#5a3b3c" transform="rotate(-13 51.6 126.8)"/><ellipse cx="76.4" cy="124.6" rx="10.1" ry="8.3" fill="#5a3b3c" transform="rotate(23 76.4 124.6)"/><ellipse cx="95.7" cy="123.1" rx="8.6" ry="6.4" fill="#8b5340" transform="rotate(-25 95.7 123.1)"/><ellipse cx="118.3" cy="127.3" rx="10.8" ry="7.5" fill="#5a3b3c" transform="rotate(10 118.3 127.3)"/><ellipse cx="144.4" cy="127.6" rx="9.5" ry="7.6" fill="#5a3b3c" transform="rotate(-26 144.4 127.6)"/><ellipse cx="167.2" cy="123.0" rx="9.7" ry="8.6" fill="#5a3b3c" transform="rotate(-31 167.2 123.0)"/><ellipse cx="194.4" cy="122.7" rx="10.8" ry="9.1" fill="#5a3b3c" transform="rotate(-46 194.4 122.7)"/><ellipse cx="217.9" cy="122.2" rx="9.6" ry="8.7" fill="#5a3b3c" transform="rotate(38 217.9 122.2)"/><ellipse cx="238.2" cy="124.7" rx="9.0" ry="7.8" fill="#5a3b3c" transform="rotate(-9 238.2 124.7)"/><ellipse cx="264.3" cy="126.0" rx="9.0" ry="6.7" fill="#5a3b3c" transform="rotate(-47 264.3 126.0)"/><ellipse cx="290.6" cy="125.9" rx="11.2" ry="9.6" fill="#5a3b3c" transform="rotate(37 290.6 125.9)"/><ellipse cx="312.5" cy="124.8" rx="10.7" ry="9.2" fill="#5a3b3c" transform="rotate(-30 312.5 124.8)"/></g><g transform="scale(0.997 0.821)"><path d="M6.0 8.0 C39.2 4.0 306.2 5.4 340.0 8.0 C373.8 10.6 344.0 29.4 344.0 34.0 C344.0 38.6 341.6 52.2 340.0 54.0 C338.4 55.8 330.2 52.8 328.0 52.0 C325.8 51.2 320.8 47.8 318.0 46.0 C315.2 44.2 303.4 34.4 300.0 34.0 C296.6 33.6 287.4 41.4 284.0 42.0 C280.6 42.6 269.4 39.2 266.0 40.0 C262.6 40.8 253.4 49.6 250.0 50.0 C246.6 50.4 235.6 45.8 232.0 44.0 C228.4 42.2 217.6 32.2 214.0 32.0 C210.4 31.8 199.8 40.2 196.0 42.0 C192.2 43.8 180.0 50.2 176.0 50.0 C172.0 49.8 160.0 40.8 156.0 40.0 C152.0 39.2 139.8 41.0 136.0 42.0 C132.2 43.0 121.6 50.4 118.0 50.0 C114.4 49.6 103.4 38.6 100.0 38.0 C96.6 37.4 87.0 44.2 84.0 44.0 C81.0 43.8 73.0 35.4 70.0 36.0 C67.0 36.6 57.4 48.0 54.0 50.0 C50.6 52.0 39.6 55.0 36.0 56.0 C32.4 57.0 20.8 60.8 18.0 60.0 C15.2 59.2 9.2 53.2 8.0 48.0 C6.8 42.8 -27.2 12.0 6.0 8.0 Z" fill="#25b676"/><path d="M0.0 4.0 C0.8 0.4 -21.6 0.4 12.0 0.0 C45.6 -0.4 302.6 -0.6 336.0 0.0 C369.4 0.6 345.4 3.8 346.0 6.0 C346.6 8.2 342.2 18.6 342.0 22.0 C341.8 25.4 344.4 36.6 344.0 40.0 C343.6 43.4 339.6 56.2 338.0 56.0 C336.4 55.8 329.6 41.8 328.0 38.0 C326.4 34.2 324.8 20.5 322.0 18.0 C319.2 15.5 304.2 13.2 300.0 13.0 C295.8 12.8 285.0 16.1 280.0 16.0 C275.0 15.9 256.0 12.1 250.0 12.0 C244.0 11.9 226.0 15.1 220.0 15.0 C214.0 14.9 196.0 11.1 190.0 11.0 C184.0 10.9 166.0 13.9 160.0 14.0 C154.0 14.1 136.0 11.9 130.0 12.0 C124.0 12.1 106.0 15.1 100.0 15.0 C94.0 14.9 76.0 11.1 70.0 11.0 C64.0 10.9 44.8 13.1 40.0 14.0 C35.2 14.9 24.2 17.4 22.0 20.0 C19.8 22.6 19.2 36.2 18.0 40.0 C16.8 43.8 11.4 58.4 10.0 58.0 C8.6 57.6 5.0 41.4 4.0 36.0 C3.0 30.6 -0.8 7.6 0.0 4.0 Z" fill="#7ed2a9"/></g><g transform="scale(0.997 1)"><path d="M4.0 2.0 Q6.0 2.0 8.0 -4.0 Q10.0 2.0 12.0 2.0 Z" fill="#7ed2a9"/><path d="M16.0 2.0 Q26.0 -3.0 28.0 -9.0 Q30.0 -3.0 40.0 2.0 Z" fill="#7ed2a9"/><path d="M148.0 2.0 Q160.0 -2.0 162.0 -8.0 Q164.0 -2.0 176.0 2.0 Z" fill="#7ed2a9"/><path d="M218.0 2.0 Q228.0 -3.0 230.0 -9.0 Q232.0 -3.0 242.0 2.0 Z" fill="#7ed2a9"/><path d="M330.0 2.0 Q334.0 0.0 336.0 -6.0 Q338.0 0.0 342.0 2.0 Z" fill="#7ed2a9"/></g></g><g fill="none" stroke="#3cc585" stroke-width="2.6"><path d="M849.0 804.0 C865.8 912.0 882.6 918.3 891.0 786.0"/><path d="M881.0 797.0 C897.8 895.5 918.6 900.5 933.0 783.0"/></g>
<g transform="translate(1056.0 919.0)"><mask id="rc3" maskUnits="userSpaceOnUse" x="-50" y="-50" width="500" height="250"><g fill="#ffffff"><path d="M282.0 14.0 C318.3 14.8 283.6 13.9 282.0 20.0 C280.4 26.1 275.6 52.0 270.0 60.0 C264.4 68.0 249.3 75.7 240.0 80.0 C230.7 84.3 208.7 88.3 200.0 92.0 C191.3 95.7 181.7 105.9 175.0 108.0 C168.3 110.1 158.7 109.7 150.0 108.0 C141.3 106.3 120.3 97.7 110.0 95.0 C99.7 92.3 82.3 91.2 73.0 88.0 C63.7 84.8 47.7 76.1 40.0 71.0 C32.3 65.9 19.0 57.3 15.0 50.0 C11.0 42.7 10.7 20.8 10.0 16.0 C9.3 11.2 -26.3 14.3 10.0 14.0 C46.3 13.7 245.7 13.2 282.0 14.0 Z"/><circle cx="19.2" cy="45.0" r="12.3"/><circle cx="31.9" cy="55.9" r="14.3"/><circle cx="49.3" cy="66.2" r="14.5"/><circle cx="66.4" cy="76.2" r="13.1"/><circle cx="85.2" cy="80.2" r="13.5"/><circle cx="102.2" cy="85.7" r="10.8"/><circle cx="121.0" cy="88.4" r="12.5"/><circle cx="135.3" cy="93.0" r="13.9"/><circle cx="153.2" cy="100.1" r="10.5"/><circle cx="172.1" cy="97.8" r="13.6"/><circle cx="185.3" cy="91.8" r="11.3"/><circle cx="200.9" cy="80.6" r="14.0"/><circle cx="219.4" cy="74.6" r="14.4"/><circle cx="235.5" cy="71.2" r="12.5"/><circle cx="252.6" cy="59.2" r="14.5"/><circle cx="272.9" cy="43.8" r="10.6"/></g></mask><g fill="#2d1a1c"><path d="M282.0 14.0 C318.3 14.8 283.6 13.9 282.0 20.0 C280.4 26.1 275.6 52.0 270.0 60.0 C264.4 68.0 249.3 75.7 240.0 80.0 C230.7 84.3 208.7 88.3 200.0 92.0 C191.3 95.7 181.7 105.9 175.0 108.0 C168.3 110.1 158.7 109.7 150.0 108.0 C141.3 106.3 120.3 97.7 110.0 95.0 C99.7 92.3 82.3 91.2 73.0 88.0 C63.7 84.8 47.7 76.1 40.0 71.0 C32.3 65.9 19.0 57.3 15.0 50.0 C11.0 42.7 10.7 20.8 10.0 16.0 C9.3 11.2 -26.3 14.3 10.0 14.0 C46.3 13.7 245.7 13.2 282.0 14.0 Z"/><circle cx="19.2" cy="45.0" r="12.3"/><circle cx="31.9" cy="55.9" r="14.3"/><circle cx="49.3" cy="66.2" r="14.5"/><circle cx="66.4" cy="76.2" r="13.1"/><circle cx="85.2" cy="80.2" r="13.5"/><circle cx="102.2" cy="85.7" r="10.8"/><circle cx="121.0" cy="88.4" r="12.5"/><circle cx="135.3" cy="93.0" r="13.9"/><circle cx="153.2" cy="100.1" r="10.5"/><circle cx="172.1" cy="97.8" r="13.6"/><circle cx="185.3" cy="91.8" r="11.3"/><circle cx="200.9" cy="80.6" r="14.0"/><circle cx="219.4" cy="74.6" r="14.4"/><circle cx="235.5" cy="71.2" r="12.5"/><circle cx="252.6" cy="59.2" r="14.5"/><circle cx="272.9" cy="43.8" r="10.6"/></g><g mask="url(#rc3)"><ellipse cx="7.6" cy="22.0" rx="10.1" ry="7.1" fill="#8b5340" transform="rotate(-40 7.6 22.0)"/><ellipse cx="34.6" cy="25.2" rx="8.7" ry="6.5" fill="#8b5340" transform="rotate(47 34.6 25.2)"/><ellipse cx="54.7" cy="25.5" rx="10.3" ry="9.4" fill="#8b5340" transform="rotate(-44 54.7 25.5)"/><ellipse cx="80.2" cy="26.1" rx="10.7" ry="9.3" fill="#5a3b3c" transform="rotate(23 80.2 26.1)"/><ellipse cx="110.0" cy="22.7" rx="11.4" ry="8.5" fill="#5a3b3c" transform="rotate(28 110.0 22.7)"/><ellipse cx="130.0" cy="26.4" rx="10.1" ry="8.3" fill="#5a3b3c" transform="rotate(38 130.0 26.4)"/><ellipse cx="150.7" cy="24.1" rx="10.3" ry="8.2" fill="#5a3b3c" transform="rotate(1 150.7 24.1)"/><ellipse cx="175.6" cy="27.7" rx="9.6" ry="8.0" fill="#5a3b3c" transform="rotate(-50 175.6 27.7)"/><ellipse cx="201.5" cy="23.3" rx="9.5" ry="6.8" fill="#5a3b3c" transform="rotate(30 201.5 23.3)"/><ellipse cx="224.3" cy="25.1" rx="9.6" ry="7.9" fill="#8b5340" transform="rotate(4 224.3 25.1)"/><ellipse cx="250.0" cy="26.3" rx="10.7" ry="8.5" fill="#8b5340" transform="rotate(-21 250.0 26.3)"/><ellipse cx="270.8" cy="26.6" rx="11.4" ry="9.4" fill="#5a3b3c" transform="rotate(-33 270.8 26.6)"/><ellipse cx="23.3" cy="43.0" rx="9.3" ry="6.6" fill="#5a3b3c" transform="rotate(-28 23.3 43.0)"/><ellipse cx="44.1" cy="43.0" rx="8.9" ry="6.4" fill="#8b5340" transform="rotate(7 44.1 43.0)"/><ellipse cx="67.7" cy="44.3" rx="11.4" ry="8.9" fill="#5a3b3c" transform="rotate(-32 67.7 44.3)"/><ellipse cx="93.8" cy="43.7" rx="10.7" ry="8.2" fill="#5a3b3c" transform="rotate(-35 93.8 43.7)"/><ellipse cx="114.5" cy="44.7" rx="10.8" ry="8.5" fill="#5a3b3c" transform="rotate(-29 114.5 44.7)"/><ellipse cx="143.3" cy="43.6" rx="10.3" ry="8.0" fill="#5a3b3c" transform="rotate(-44 143.3 43.6)"/><ellipse cx="164.2" cy="42.8" rx="11.0" ry="8.1" fill="#5a3b3c" transform="rotate(-22 164.2 42.8)"/><ellipse cx="192.9" cy="43.2" rx="10.3" ry="8.4" fill="#5a3b3c" transform="rotate(-40 192.9 43.2)"/><ellipse cx="211.4" cy="44.9" rx="10.1" ry="9.2" fill="#5a3b3c" transform="rotate(-47 211.4 44.9)"/><ellipse cx="238.6" cy="45.5" rx="9.4" ry="7.7" fill="#5a3b3c" transform="rotate(32 238.6 45.5)"/><ellipse cx="265.3" cy="42.4" rx="10.1" ry="7.8" fill="#5a3b3c" transform="rotate(42 265.3 42.4)"/><ellipse cx="7.8" cy="62.8" rx="10.0" ry="7.1" fill="#8b5340" transform="rotate(31 7.8 62.8)"/><ellipse cx="35.8" cy="66.1" rx="9.2" ry="7.4" fill="#8b5340" transform="rotate(-3 35.8 66.1)"/><ellipse cx="60.6" cy="66.4" rx="11.1" ry="7.9" fill="#5a3b3c" transform="rotate(26 60.6 66.4)"/><ellipse cx="78.7" cy="62.3" rx="10.3" ry="7.4" fill="#5a3b3c" transform="rotate(-46 78.7 62.3)"/><ellipse cx="106.9" cy="63.1" rx="9.6" ry="7.7" fill="#8b5340" transform="rotate(18 106.9 63.1)"/><ellipse cx="129.8" cy="66.2" rx="8.8" ry="6.7" fill="#8b5340" transform="rotate(9 129.8 66.2)"/><ellipse cx="157.6" cy="65.5" rx="11.5" ry="10.1" fill="#5a3b3c" transform="rotate(-37 157.6 65.5)"/><ellipse cx="181.1" cy="66.0" rx="8.9" ry="8.1" fill="#5a3b3c" transform="rotate(-37 181.1 66.0)"/><ellipse cx="198.9" cy="62.7" rx="11.4" ry="8.9" fill="#5a3b3c" transform="rotate(44 198.9 62.7)"/><ellipse cx="222.2" cy="65.8" rx="11.1" ry="8.0" fill="#8b5340" transform="rotate(-50 222.2 65.8)"/><ellipse cx="248.1" cy="65.1" rx="9.8" ry="8.9" fill="#8b5340" transform="rotate(-48 248.1 65.1)"/><ellipse cx="277.7" cy="65.1" rx="11.2" ry="9.0" fill="#5a3b3c" transform="rotate(-10 277.7 65.1)"/><ellipse cx="22.8" cy="83.3" rx="9.3" ry="7.1" fill="#8b5340" transform="rotate(-27 22.8 83.3)"/><ellipse cx="49.8" cy="86.7" rx="11.3" ry="10.1" fill="#5a3b3c" transform="rotate(-12 49.8 86.7)"/><ellipse cx="73.7" cy="82.6" rx="9.2" ry="7.7" fill="#5a3b3c" transform="rotate(12 73.7 82.6)"/><ellipse cx="94.5" cy="87.3" rx="9.8" ry="7.0" fill="#5a3b3c" transform="rotate(-12 94.5 87.3)"/><ellipse cx="117.7" cy="85.7" rx="9.8" ry="7.3" fill="#5a3b3c" transform="rotate(1 117.7 85.7)"/><ellipse cx="138.5" cy="82.6" rx="8.6" ry="6.4" fill="#5a3b3c" transform="rotate(-4 138.5 82.6)"/><ellipse cx="167.3" cy="82.8" rx="9.5" ry="7.6" fill="#5a3b3c" transform="rotate(27 167.3 82.8)"/><ellipse cx="190.8" cy="87.6" rx="9.7" ry="8.2" fill="#5a3b3c" transform="rotate(48 190.8 87.6)"/><ellipse cx="212.7" cy="82.1" rx="9.9" ry="8.8" fill="#5a3b3c" transform="rotate(-9 212.7 82.1)"/><ellipse cx="240.1" cy="86.8" rx="9.9" ry="6.9" fill="#5a3b3c" transform="rotate(18 240.1 86.8)"/><ellipse cx="259.6" cy="83.3" rx="9.4" ry="6.8" fill="#5a3b3c" transform="rotate(-8 259.6 83.3)"/><ellipse cx="7.3" cy="102.6" rx="11.5" ry="9.7" fill="#5a3b3c" transform="rotate(0 7.3 102.6)"/><ellipse cx="33.1" cy="105.5" rx="10.0" ry="7.8" fill="#5a3b3c" transform="rotate(-16 33.1 105.5)"/><ellipse cx="55.6" cy="107.5" rx="10.9" ry="9.5" fill="#5a3b3c" transform="rotate(-28 55.6 107.5)"/><ellipse cx="82.6" cy="102.1" rx="8.6" ry="6.9" fill="#5a3b3c" transform="rotate(46 82.6 102.1)"/><ellipse cx="107.4" cy="107.4" rx="9.3" ry="6.8" fill="#5a3b3c" transform="rotate(7 107.4 107.4)"/><ellipse cx="129.8" cy="108.0" rx="8.9" ry="7.6" fill="#8b5340" transform="rotate(45 129.8 108.0)"/><ellipse cx="154.8" cy="105.3" rx="8.6" ry="6.4" fill="#5a3b3c" transform="rotate(49 154.8 105.3)"/><ellipse cx="181.6" cy="106.6" rx="9.5" ry="8.2" fill="#5a3b3c" transform="rotate(-33 181.6 106.6)"/><ellipse cx="205.2" cy="103.3" rx="10.6" ry="8.4" fill="#8b5340" transform="rotate(21 205.2 103.3)"/><ellipse cx="230.0" cy="107.6" rx="10.0" ry="7.1" fill="#5a3b3c" transform="rotate(1 230.0 107.6)"/><ellipse cx="253.1" cy="104.6" rx="9.1" ry="6.5" fill="#5a3b3c" transform="rotate(-29 253.1 104.6)"/><ellipse cx="277.7" cy="102.5" rx="11.2" ry="9.7" fill="#5a3b3c" transform="rotate(17 277.7 102.5)"/><ellipse cx="19.5" cy="125.2" rx="10.1" ry="8.6" fill="#5a3b3c" transform="rotate(-28 19.5 125.2)"/><ellipse cx="42.2" cy="126.3" rx="11.4" ry="9.6" fill="#5a3b3c" transform="rotate(-7 42.2 126.3)"/><ellipse cx="68.3" cy="122.8" rx="8.6" ry="6.8" fill="#5a3b3c" transform="rotate(49 68.3 122.8)"/><ellipse cx="92.0" cy="124.8" rx="9.4" ry="8.4" fill="#5a3b3c" transform="rotate(23 92.0 124.8)"/><ellipse cx="119.7" cy="125.8" rx="11.3" ry="8.8" fill="#5a3b3c" transform="rotate(46 119.7 125.8)"/><ellipse cx="144.3" cy="127.5" rx="9.6" ry="8.8" fill="#8b5340" transform="rotate(0 144.3 127.5)"/><ellipse cx="163.1" cy="124.5" rx="11.0" ry="9.3" fill="#5a3b3c" transform="rotate(28 163.1 124.5)"/><ellipse cx="186.8" cy="127.8" rx="9.3" ry="7.7" fill="#5a3b3c" transform="rotate(-6 186.8 127.8)"/><ellipse cx="214.3" cy="128.0" rx="10.4" ry="8.4" fill="#5a3b3c" transform="rotate(-37 214.3 128.0)"/><ellipse cx="235.6" cy="122.1" rx="8.9" ry="6.8" fill="#5a3b3c" transform="rotate(-22 235.6 122.1)"/><ellipse cx="258.1" cy="126.0" rx="9.3" ry="8.5" fill="#5a3b3c" transform="rotate(-6 258.1 126.0)"/></g><g transform="scale(0.847 0.893)"><path d="M6.0 8.0 C39.2 4.0 306.2 5.4 340.0 8.0 C373.8 10.6 344.0 29.4 344.0 34.0 C344.0 38.6 341.6 52.2 340.0 54.0 C338.4 55.8 330.2 52.8 328.0 52.0 C325.8 51.2 320.8 47.8 318.0 46.0 C315.2 44.2 303.4 34.4 300.0 34.0 C296.6 33.6 287.4 41.4 284.0 42.0 C280.6 42.6 269.4 39.2 266.0 40.0 C262.6 40.8 253.4 49.6 250.0 50.0 C246.6 50.4 235.6 45.8 232.0 44.0 C228.4 42.2 217.6 32.2 214.0 32.0 C210.4 31.8 199.8 40.2 196.0 42.0 C192.2 43.8 180.0 50.2 176.0 50.0 C172.0 49.8 160.0 40.8 156.0 40.0 C152.0 39.2 139.8 41.0 136.0 42.0 C132.2 43.0 121.6 50.4 118.0 50.0 C114.4 49.6 103.4 38.6 100.0 38.0 C96.6 37.4 87.0 44.2 84.0 44.0 C81.0 43.8 73.0 35.4 70.0 36.0 C67.0 36.6 57.4 48.0 54.0 50.0 C50.6 52.0 39.6 55.0 36.0 56.0 C32.4 57.0 20.8 60.8 18.0 60.0 C15.2 59.2 9.2 53.2 8.0 48.0 C6.8 42.8 -27.2 12.0 6.0 8.0 Z" fill="#25b676"/><path d="M0.0 4.0 C0.8 0.4 -21.6 0.4 12.0 0.0 C45.6 -0.4 302.6 -0.6 336.0 0.0 C369.4 0.6 345.4 3.8 346.0 6.0 C346.6 8.2 342.2 18.6 342.0 22.0 C341.8 25.4 344.4 36.6 344.0 40.0 C343.6 43.4 339.6 56.2 338.0 56.0 C336.4 55.8 329.6 41.8 328.0 38.0 C326.4 34.2 324.8 20.5 322.0 18.0 C319.2 15.5 304.2 13.2 300.0 13.0 C295.8 12.8 285.0 16.1 280.0 16.0 C275.0 15.9 256.0 12.1 250.0 12.0 C244.0 11.9 226.0 15.1 220.0 15.0 C214.0 14.9 196.0 11.1 190.0 11.0 C184.0 10.9 166.0 13.9 160.0 14.0 C154.0 14.1 136.0 11.9 130.0 12.0 C124.0 12.1 106.0 15.1 100.0 15.0 C94.0 14.9 76.0 11.1 70.0 11.0 C64.0 10.9 44.8 13.1 40.0 14.0 C35.2 14.9 24.2 17.4 22.0 20.0 C19.8 22.6 19.2 36.2 18.0 40.0 C16.8 43.8 11.4 58.4 10.0 58.0 C8.6 57.6 5.0 41.4 4.0 36.0 C3.0 30.6 -0.8 7.6 0.0 4.0 Z" fill="#7ed2a9"/></g><g transform="scale(0.847 1)"><path d="M4.0 2.0 Q6.0 2.0 8.0 -4.0 Q10.0 2.0 12.0 2.0 Z" fill="#7ed2a9"/><path d="M16.0 2.0 Q26.0 -3.0 28.0 -9.0 Q30.0 -3.0 40.0 2.0 Z" fill="#7ed2a9"/><path d="M148.0 2.0 Q160.0 -2.0 162.0 -8.0 Q164.0 -2.0 176.0 2.0 Z" fill="#7ed2a9"/><path d="M218.0 2.0 Q228.0 -3.0 230.0 -9.0 Q232.0 -3.0 242.0 2.0 Z" fill="#7ed2a9"/><path d="M330.0 2.0 Q334.0 0.0 336.0 -6.0 Q338.0 0.0 342.0 2.0 Z" fill="#7ed2a9"/></g></g>
<g transform="translate(1867.0 866.0)"><mask id="rc4" maskUnits="userSpaceOnUse" x="-50" y="-50" width="500" height="250"><g fill="#ffffff"><path d="M330.0 14.0 C371.9 15.3 334.0 18.4 330.0 24.0 C326.0 29.6 308.7 50.5 300.0 56.0 C291.3 61.5 273.7 61.5 265.0 65.0 C256.3 68.5 245.0 77.7 235.0 82.0 C225.0 86.3 200.7 93.7 190.0 97.0 C179.3 100.3 167.0 107.0 155.0 107.0 C143.0 107.0 114.0 102.2 100.0 97.0 C86.0 91.8 60.0 73.6 50.0 68.0 C40.0 62.4 29.5 61.4 25.0 55.0 C20.5 48.6 17.2 25.5 16.0 20.0 C14.8 14.5 -25.9 14.8 16.0 14.0 C57.9 13.2 288.1 12.7 330.0 14.0 Z"/><circle cx="26.4" cy="46.3" r="12.3"/><circle cx="45.6" cy="56.4" r="12.3"/><circle cx="63.1" cy="67.4" r="10.9"/><circle cx="78.4" cy="75.4" r="14.0"/><circle cx="98.5" cy="87.2" r="10.5"/><circle cx="117.7" cy="92.0" r="10.2"/><circle cx="135.3" cy="93.3" r="13.3"/><circle cx="149.7" cy="98.5" r="10.1"/><circle cx="162.4" cy="96.2" r="11.0"/><circle cx="177.7" cy="91.2" r="12.3"/><circle cx="198.0" cy="85.2" r="12.6"/><circle cx="213.9" cy="79.0" r="13.3"/><circle cx="232.8" cy="72.5" r="15.0"/><circle cx="247.8" cy="64.0" r="13.5"/><circle cx="261.7" cy="56.8" r="11.4"/><circle cx="284.9" cy="51.4" r="12.0"/><circle cx="301.2" cy="45.1" r="14.8"/><circle cx="315.6" cy="33.7" r="11.0"/></g></mask><g fill="#2d1a1c"><path d="M330.0 14.0 C371.9 15.3 334.0 18.4 330.0 24.0 C326.0 29.6 308.7 50.5 300.0 56.0 C291.3 61.5 273.7 61.5 265.0 65.0 C256.3 68.5 245.0 77.7 235.0 82.0 C225.0 86.3 200.7 93.7 190.0 97.0 C179.3 100.3 167.0 107.0 155.0 107.0 C143.0 107.0 114.0 102.2 100.0 97.0 C86.0 91.8 60.0 73.6 50.0 68.0 C40.0 62.4 29.5 61.4 25.0 55.0 C20.5 48.6 17.2 25.5 16.0 20.0 C14.8 14.5 -25.9 14.8 16.0 14.0 C57.9 13.2 288.1 12.7 330.0 14.0 Z"/><circle cx="26.4" cy="46.3" r="12.3"/><circle cx="45.6" cy="56.4" r="12.3"/><circle cx="63.1" cy="67.4" r="10.9"/><circle cx="78.4" cy="75.4" r="14.0"/><circle cx="98.5" cy="87.2" r="10.5"/><circle cx="117.7" cy="92.0" r="10.2"/><circle cx="135.3" cy="93.3" r="13.3"/><circle cx="149.7" cy="98.5" r="10.1"/><circle cx="162.4" cy="96.2" r="11.0"/><circle cx="177.7" cy="91.2" r="12.3"/><circle cx="198.0" cy="85.2" r="12.6"/><circle cx="213.9" cy="79.0" r="13.3"/><circle cx="232.8" cy="72.5" r="15.0"/><circle cx="247.8" cy="64.0" r="13.5"/><circle cx="261.7" cy="56.8" r="11.4"/><circle cx="284.9" cy="51.4" r="12.0"/><circle cx="301.2" cy="45.1" r="14.8"/><circle cx="315.6" cy="33.7" r="11.0"/></g><g mask="url(#rc4)"><ellipse cx="19.8" cy="24.4" rx="10.4" ry="9.1" fill="#8b5340" transform="rotate(-16 19.8 24.4)"/><ellipse cx="38.7" cy="23.9" rx="9.7" ry="8.8" fill="#8b5340" transform="rotate(-33 38.7 23.9)"/><ellipse cx="62.0" cy="22.6" rx="10.9" ry="8.0" fill="#8b5340" transform="rotate(21 62.0 22.6)"/><ellipse cx="85.5" cy="25.1" rx="10.8" ry="8.6" fill="#5a3b3c" transform="rotate(-1 85.5 25.1)"/><ellipse cx="108.9" cy="24.5" rx="9.3" ry="8.5" fill="#8b5340" transform="rotate(25 108.9 24.5)"/><ellipse cx="134.4" cy="27.3" rx="9.7" ry="8.6" fill="#8b5340" transform="rotate(32 134.4 27.3)"/><ellipse cx="160.6" cy="22.3" rx="9.8" ry="6.9" fill="#8b5340" transform="rotate(28 160.6 22.3)"/><ellipse cx="182.6" cy="23.8" rx="8.8" ry="7.3" fill="#8b5340" transform="rotate(-19 182.6 23.8)"/><ellipse cx="204.1" cy="24.2" rx="8.9" ry="7.4" fill="#5a3b3c" transform="rotate(23 204.1 24.2)"/><ellipse cx="229.1" cy="24.3" rx="9.4" ry="7.1" fill="#5a3b3c" transform="rotate(28 229.1 24.3)"/><ellipse cx="254.0" cy="23.1" rx="11.3" ry="8.4" fill="#5a3b3c" transform="rotate(-1 254.0 23.1)"/><ellipse cx="283.1" cy="25.6" rx="8.8" ry="6.2" fill="#5a3b3c" transform="rotate(-18 283.1 25.6)"/><ellipse cx="301.9" cy="26.2" rx="11.0" ry="9.1" fill="#5a3b3c" transform="rotate(-13 301.9 26.2)"/><ellipse cx="328.2" cy="27.6" rx="8.9" ry="7.2" fill="#5a3b3c" transform="rotate(33 328.2 27.6)"/><ellipse cx="30.8" cy="45.7" rx="11.3" ry="8.4" fill="#5a3b3c" transform="rotate(-48 30.8 45.7)"/><ellipse cx="48.6" cy="44.5" rx="8.6" ry="6.6" fill="#8b5340" transform="rotate(17 48.6 44.5)"/><ellipse cx="76.6" cy="42.8" rx="11.2" ry="10.2" fill="#5a3b3c" transform="rotate(34 76.6 42.8)"/><ellipse cx="101.9" cy="45.1" rx="10.3" ry="9.3" fill="#5a3b3c" transform="rotate(10 101.9 45.1)"/><ellipse cx="127.3" cy="46.2" rx="8.6" ry="7.2" fill="#5a3b3c" transform="rotate(11 127.3 46.2)"/><ellipse cx="144.5" cy="43.9" rx="8.7" ry="7.0" fill="#8b5340" transform="rotate(-3 144.5 43.9)"/><ellipse cx="173.9" cy="47.4" rx="10.6" ry="9.3" fill="#5a3b3c" transform="rotate(-7 173.9 47.4)"/><ellipse cx="194.8" cy="46.1" rx="11.1" ry="8.8" fill="#5a3b3c" transform="rotate(-47 194.8 46.1)"/><ellipse cx="222.9" cy="45.4" rx="9.6" ry="8.0" fill="#5a3b3c" transform="rotate(27 222.9 45.4)"/><ellipse cx="240.6" cy="42.5" rx="9.3" ry="7.3" fill="#8b5340" transform="rotate(-8 240.6 42.5)"/><ellipse cx="267.1" cy="46.4" rx="9.8" ry="8.7" fill="#5a3b3c" transform="rotate(-40 267.1 46.4)"/><ellipse cx="292.1" cy="45.1" rx="8.8" ry="6.2" fill="#5a3b3c" transform="rotate(39 292.1 45.1)"/><ellipse cx="312.9" cy="46.7" rx="10.0" ry="8.9" fill="#5a3b3c" transform="rotate(-3 312.9 46.7)"/><ellipse cx="14.4" cy="66.1" rx="9.0" ry="8.1" fill="#8b5340" transform="rotate(34 14.4 66.1)"/><ellipse cx="43.4" cy="65.0" rx="9.7" ry="7.3" fill="#8b5340" transform="rotate(31 43.4 65.0)"/><ellipse cx="63.4" cy="66.8" rx="11.1" ry="8.7" fill="#5a3b3c" transform="rotate(24 63.4 66.8)"/><ellipse cx="91.4" cy="63.3" rx="9.6" ry="8.6" fill="#8b5340" transform="rotate(-45 91.4 63.3)"/><ellipse cx="113.7" cy="67.7" rx="9.0" ry="7.2" fill="#5a3b3c" transform="rotate(-15 113.7 67.7)"/><ellipse cx="139.4" cy="67.0" rx="10.1" ry="8.5" fill="#5a3b3c" transform="rotate(41 139.4 67.0)"/><ellipse cx="162.7" cy="67.9" rx="8.7" ry="6.2" fill="#5a3b3c" transform="rotate(27 162.7 67.9)"/><ellipse cx="180.3" cy="66.3" rx="9.4" ry="8.2" fill="#5a3b3c" transform="rotate(-48 180.3 66.3)"/><ellipse cx="209.1" cy="64.4" rx="10.8" ry="8.2" fill="#8b5340" transform="rotate(49 209.1 64.4)"/><ellipse cx="229.1" cy="62.3" rx="9.8" ry="8.3" fill="#5a3b3c" transform="rotate(33 229.1 62.3)"/><ellipse cx="257.1" cy="64.2" rx="9.1" ry="8.0" fill="#8b5340" transform="rotate(-18 257.1 64.2)"/><ellipse cx="277.4" cy="62.1" rx="10.6" ry="7.9" fill="#5a3b3c" transform="rotate(-16 277.4 62.1)"/><ellipse cx="306.2" cy="65.2" rx="10.0" ry="9.2" fill="#5a3b3c" transform="rotate(-30 306.2 65.2)"/><ellipse cx="327.1" cy="66.8" rx="8.8" ry="7.9" fill="#5a3b3c" transform="rotate(42 327.1 66.8)"/><ellipse cx="27.1" cy="84.7" rx="11.2" ry="7.8" fill="#8b5340" transform="rotate(20 27.1 84.7)"/><ellipse cx="52.6" cy="87.3" rx="11.3" ry="9.1" fill="#5a3b3c" transform="rotate(33 52.6 87.3)"/><ellipse cx="79.9" cy="82.6" rx="10.9" ry="9.8" fill="#5a3b3c" transform="rotate(-35 79.9 82.6)"/><ellipse cx="97.7" cy="87.4" rx="11.4" ry="9.4" fill="#5a3b3c" transform="rotate(-9 97.7 87.4)"/><ellipse cx="122.1" cy="86.3" rx="10.0" ry="7.1" fill="#8b5340" transform="rotate(-7 122.1 86.3)"/><ellipse cx="148.4" cy="86.6" rx="8.6" ry="7.5" fill="#5a3b3c" transform="rotate(-42 148.4 86.6)"/><ellipse cx="171.4" cy="82.2" rx="10.6" ry="9.5" fill="#5a3b3c" transform="rotate(10 171.4 82.2)"/><ellipse cx="193.2" cy="85.1" rx="11.0" ry="9.4" fill="#5a3b3c" transform="rotate(13 193.2 85.1)"/><ellipse cx="220.6" cy="86.1" rx="9.8" ry="8.1" fill="#5a3b3c" transform="rotate(43 220.6 86.1)"/><ellipse cx="244.5" cy="83.0" rx="11.2" ry="8.5" fill="#5a3b3c" transform="rotate(35 244.5 83.0)"/><ellipse cx="267.0" cy="87.1" rx="9.1" ry="8.1" fill="#5a3b3c" transform="rotate(19 267.0 87.1)"/><ellipse cx="292.2" cy="85.4" rx="10.1" ry="8.2" fill="#8b5340" transform="rotate(27 292.2 85.4)"/><ellipse cx="315.0" cy="85.2" rx="11.3" ry="9.2" fill="#8b5340" transform="rotate(22 315.0 85.2)"/><ellipse cx="13.0" cy="102.6" rx="11.3" ry="9.0" fill="#8b5340" transform="rotate(1 13.0 102.6)"/><ellipse cx="38.2" cy="104.8" rx="9.8" ry="8.6" fill="#8b5340" transform="rotate(10 38.2 104.8)"/><ellipse cx="64.2" cy="102.7" rx="8.6" ry="6.5" fill="#5a3b3c" transform="rotate(39 64.2 102.7)"/><ellipse cx="90.2" cy="102.1" rx="9.2" ry="7.8" fill="#8b5340" transform="rotate(-9 90.2 102.1)"/><ellipse cx="113.8" cy="103.5" rx="10.0" ry="8.3" fill="#5a3b3c" transform="rotate(15 113.8 103.5)"/><ellipse cx="137.0" cy="106.3" rx="11.1" ry="7.9" fill="#5a3b3c" transform="rotate(31 137.0 106.3)"/><ellipse cx="159.3" cy="105.2" rx="9.1" ry="7.6" fill="#8b5340" transform="rotate(31 159.3 105.2)"/><ellipse cx="181.7" cy="103.3" rx="10.3" ry="7.5" fill="#5a3b3c" transform="rotate(44 181.7 103.3)"/><ellipse cx="209.0" cy="104.1" rx="10.3" ry="9.2" fill="#8b5340" transform="rotate(-26 209.0 104.1)"/><ellipse cx="229.7" cy="108.0" rx="8.9" ry="6.7" fill="#5a3b3c" transform="rotate(43 229.7 108.0)"/><ellipse cx="252.7" cy="104.3" rx="11.3" ry="9.3" fill="#5a3b3c" transform="rotate(40 252.7 104.3)"/><ellipse cx="277.0" cy="104.4" rx="8.6" ry="6.4" fill="#5a3b3c" transform="rotate(37 277.0 104.4)"/><ellipse cx="302.9" cy="106.9" rx="10.6" ry="8.9" fill="#5a3b3c" transform="rotate(-7 302.9 106.9)"/><ellipse cx="328.0" cy="106.1" rx="8.7" ry="6.3" fill="#8b5340" transform="rotate(-46 328.0 106.1)"/><ellipse cx="30.1" cy="125.7" rx="9.9" ry="7.4" fill="#5a3b3c" transform="rotate(-36 30.1 125.7)"/><ellipse cx="49.6" cy="127.0" rx="11.3" ry="8.1" fill="#5a3b3c" transform="rotate(-43 49.6 127.0)"/><ellipse cx="73.1" cy="126.1" rx="8.8" ry="6.9" fill="#8b5340" transform="rotate(4 73.1 126.1)"/><ellipse cx="100.1" cy="124.6" rx="8.5" ry="7.3" fill="#5a3b3c" transform="rotate(-25 100.1 124.6)"/><ellipse cx="121.5" cy="124.7" rx="9.7" ry="7.2" fill="#5a3b3c" transform="rotate(-29 121.5 124.7)"/><ellipse cx="144.8" cy="126.8" rx="8.8" ry="7.7" fill="#5a3b3c" transform="rotate(30 144.8 126.8)"/><ellipse cx="175.5" cy="125.4" rx="10.3" ry="7.9" fill="#8b5340" transform="rotate(47 175.5 125.4)"/><ellipse cx="194.1" cy="127.5" rx="10.8" ry="9.5" fill="#5a3b3c" transform="rotate(1 194.1 127.5)"/><ellipse cx="217.1" cy="124.0" rx="9.6" ry="7.6" fill="#5a3b3c" transform="rotate(-27 217.1 124.0)"/><ellipse cx="243.2" cy="126.3" rx="9.5" ry="7.7" fill="#8b5340" transform="rotate(-49 243.2 126.3)"/><ellipse cx="271.1" cy="127.9" rx="8.6" ry="6.6" fill="#5a3b3c" transform="rotate(35 271.1 127.9)"/><ellipse cx="290.4" cy="123.3" rx="9.0" ry="6.5" fill="#5a3b3c" transform="rotate(15 290.4 123.3)"/><ellipse cx="320.0" cy="125.9" rx="10.8" ry="9.9" fill="#5a3b3c" transform="rotate(-48 320.0 125.9)"/></g><g transform="scale(0.954 0.964)"><path d="M6.0 8.0 C39.2 4.0 306.2 5.4 340.0 8.0 C373.8 10.6 344.0 29.4 344.0 34.0 C344.0 38.6 341.6 52.2 340.0 54.0 C338.4 55.8 330.2 52.8 328.0 52.0 C325.8 51.2 320.8 47.8 318.0 46.0 C315.2 44.2 303.4 34.4 300.0 34.0 C296.6 33.6 287.4 41.4 284.0 42.0 C280.6 42.6 269.4 39.2 266.0 40.0 C262.6 40.8 253.4 49.6 250.0 50.0 C246.6 50.4 235.6 45.8 232.0 44.0 C228.4 42.2 217.6 32.2 214.0 32.0 C210.4 31.8 199.8 40.2 196.0 42.0 C192.2 43.8 180.0 50.2 176.0 50.0 C172.0 49.8 160.0 40.8 156.0 40.0 C152.0 39.2 139.8 41.0 136.0 42.0 C132.2 43.0 121.6 50.4 118.0 50.0 C114.4 49.6 103.4 38.6 100.0 38.0 C96.6 37.4 87.0 44.2 84.0 44.0 C81.0 43.8 73.0 35.4 70.0 36.0 C67.0 36.6 57.4 48.0 54.0 50.0 C50.6 52.0 39.6 55.0 36.0 56.0 C32.4 57.0 20.8 60.8 18.0 60.0 C15.2 59.2 9.2 53.2 8.0 48.0 C6.8 42.8 -27.2 12.0 6.0 8.0 Z" fill="#25b676"/><path d="M0.0 4.0 C0.8 0.4 -21.6 0.4 12.0 0.0 C45.6 -0.4 302.6 -0.6 336.0 0.0 C369.4 0.6 345.4 3.8 346.0 6.0 C346.6 8.2 342.2 18.6 342.0 22.0 C341.8 25.4 344.4 36.6 344.0 40.0 C343.6 43.4 339.6 56.2 338.0 56.0 C336.4 55.8 329.6 41.8 328.0 38.0 C326.4 34.2 324.8 20.5 322.0 18.0 C319.2 15.5 304.2 13.2 300.0 13.0 C295.8 12.8 285.0 16.1 280.0 16.0 C275.0 15.9 256.0 12.1 250.0 12.0 C244.0 11.9 226.0 15.1 220.0 15.0 C214.0 14.9 196.0 11.1 190.0 11.0 C184.0 10.9 166.0 13.9 160.0 14.0 C154.0 14.1 136.0 11.9 130.0 12.0 C124.0 12.1 106.0 15.1 100.0 15.0 C94.0 14.9 76.0 11.1 70.0 11.0 C64.0 10.9 44.8 13.1 40.0 14.0 C35.2 14.9 24.2 17.4 22.0 20.0 C19.8 22.6 19.2 36.2 18.0 40.0 C16.8 43.8 11.4 58.4 10.0 58.0 C8.6 57.6 5.0 41.4 4.0 36.0 C3.0 30.6 -0.8 7.6 0.0 4.0 Z" fill="#7ed2a9"/></g><g transform="scale(0.954 1)"><path d="M4.0 2.0 Q6.0 2.0 8.0 -4.0 Q10.0 2.0 12.0 2.0 Z" fill="#7ed2a9"/><path d="M16.0 2.0 Q26.0 -3.0 28.0 -9.0 Q30.0 -3.0 40.0 2.0 Z" fill="#7ed2a9"/><path d="M148.0 2.0 Q160.0 -2.0 162.0 -8.0 Q164.0 -2.0 176.0 2.0 Z" fill="#7ed2a9"/><path d="M218.0 2.0 Q228.0 -3.0 230.0 -9.0 Q232.0 -3.0 242.0 2.0 Z" fill="#7ed2a9"/><path d="M330.0 2.0 Q334.0 0.0 336.0 -6.0 Q338.0 0.0 342.0 2.0 Z" fill="#7ed2a9"/></g></g>
<g transform="translate(1473.0 1003.0)"><mask id="rc5" maskUnits="userSpaceOnUse" x="-50" y="-50" width="500" height="250"><g fill="#ffffff"><path d="M330.0 14.0 C371.3 14.0 331.1 10.5 330.0 14.0 C328.9 17.5 328.7 32.5 322.0 40.0 C315.3 47.5 296.3 64.9 280.0 70.0 C263.7 75.1 224.0 78.3 200.0 78.0 C176.0 77.7 121.3 70.9 100.0 68.0 C78.7 65.1 50.7 62.9 40.0 56.0 C29.3 49.1 22.7 21.6 20.0 16.0 C17.3 10.4 -21.3 14.3 20.0 14.0 C61.3 13.7 288.7 14.0 330.0 14.0 Z"/><circle cx="31.1" cy="27.5" r="11.3"/><circle cx="46.2" cy="46.9" r="14.2"/><circle cx="61.8" cy="52.6" r="10.7"/><circle cx="82.1" cy="56.4" r="10.7"/><circle cx="96.8" cy="58.8" r="11.5"/><circle cx="113.3" cy="59.8" r="13.0"/><circle cx="134.1" cy="63.1" r="10.7"/><circle cx="152.7" cy="62.5" r="14.0"/><circle cx="170.9" cy="63.9" r="14.7"/><circle cx="184.6" cy="65.8" r="14.2"/><circle cx="202.8" cy="68.1" r="12.8"/><circle cx="218.3" cy="66.9" r="12.1"/><circle cx="235.9" cy="64.0" r="14.1"/><circle cx="254.4" cy="62.5" r="13.5"/><circle cx="273.6" cy="62.7" r="10.7"/><circle cx="287.4" cy="55.3" r="10.9"/><circle cx="306.1" cy="42.7" r="11.3"/></g></mask><g fill="#2d1a1c"><path d="M330.0 14.0 C371.3 14.0 331.1 10.5 330.0 14.0 C328.9 17.5 328.7 32.5 322.0 40.0 C315.3 47.5 296.3 64.9 280.0 70.0 C263.7 75.1 224.0 78.3 200.0 78.0 C176.0 77.7 121.3 70.9 100.0 68.0 C78.7 65.1 50.7 62.9 40.0 56.0 C29.3 49.1 22.7 21.6 20.0 16.0 C17.3 10.4 -21.3 14.3 20.0 14.0 C61.3 13.7 288.7 14.0 330.0 14.0 Z"/><circle cx="31.1" cy="27.5" r="11.3"/><circle cx="46.2" cy="46.9" r="14.2"/><circle cx="61.8" cy="52.6" r="10.7"/><circle cx="82.1" cy="56.4" r="10.7"/><circle cx="96.8" cy="58.8" r="11.5"/><circle cx="113.3" cy="59.8" r="13.0"/><circle cx="134.1" cy="63.1" r="10.7"/><circle cx="152.7" cy="62.5" r="14.0"/><circle cx="170.9" cy="63.9" r="14.7"/><circle cx="184.6" cy="65.8" r="14.2"/><circle cx="202.8" cy="68.1" r="12.8"/><circle cx="218.3" cy="66.9" r="12.1"/><circle cx="235.9" cy="64.0" r="14.1"/><circle cx="254.4" cy="62.5" r="13.5"/><circle cx="273.6" cy="62.7" r="10.7"/><circle cx="287.4" cy="55.3" r="10.9"/><circle cx="306.1" cy="42.7" r="11.3"/></g><g mask="url(#rc5)"><ellipse cx="19.2" cy="22.8" rx="9.2" ry="6.9" fill="#5a3b3c" transform="rotate(-26 19.2 22.8)"/><ellipse cx="45.6" cy="22.8" rx="10.4" ry="8.3" fill="#5a3b3c" transform="rotate(-50 45.6 22.8)"/><ellipse cx="69.8" cy="27.6" rx="8.9" ry="7.8" fill="#8b5340" transform="rotate(6 69.8 27.6)"/><ellipse cx="93.1" cy="23.0" rx="11.1" ry="9.9" fill="#5a3b3c" transform="rotate(-6 93.1 23.0)"/><ellipse cx="113.6" cy="27.1" rx="10.6" ry="7.8" fill="#5a3b3c" transform="rotate(40 113.6 27.1)"/><ellipse cx="140.8" cy="26.3" rx="10.4" ry="8.6" fill="#8b5340" transform="rotate(25 140.8 26.3)"/><ellipse cx="160.3" cy="25.5" rx="9.0" ry="6.7" fill="#5a3b3c" transform="rotate(50 160.3 25.5)"/><ellipse cx="189.5" cy="22.7" rx="8.7" ry="7.3" fill="#8b5340" transform="rotate(21 189.5 22.7)"/><ellipse cx="214.5" cy="26.2" rx="11.0" ry="9.2" fill="#5a3b3c" transform="rotate(17 214.5 26.2)"/><ellipse cx="232.0" cy="28.0" rx="9.4" ry="7.1" fill="#8b5340" transform="rotate(26 232.0 28.0)"/><ellipse cx="261.6" cy="27.6" rx="11.1" ry="7.8" fill="#5a3b3c" transform="rotate(-10 261.6 27.6)"/><ellipse cx="282.7" cy="25.0" rx="10.1" ry="8.1" fill="#5a3b3c" transform="rotate(35 282.7 25.0)"/><ellipse cx="305.7" cy="26.8" rx="10.6" ry="7.8" fill="#5a3b3c" transform="rotate(-32 305.7 26.8)"/><ellipse cx="30.1" cy="46.1" rx="9.3" ry="7.7" fill="#5a3b3c" transform="rotate(-5 30.1 46.1)"/><ellipse cx="58.2" cy="45.6" rx="10.4" ry="8.3" fill="#5a3b3c" transform="rotate(-10 58.2 45.6)"/><ellipse cx="79.2" cy="42.5" rx="10.3" ry="7.2" fill="#5a3b3c" transform="rotate(49 79.2 42.5)"/><ellipse cx="102.5" cy="44.7" rx="9.7" ry="6.9" fill="#5a3b3c" transform="rotate(17 102.5 44.7)"/><ellipse cx="127.5" cy="42.8" rx="8.8" ry="7.8" fill="#5a3b3c" transform="rotate(-23 127.5 42.8)"/><ellipse cx="150.5" cy="45.6" rx="9.5" ry="6.9" fill="#5a3b3c" transform="rotate(12 150.5 45.6)"/><ellipse cx="175.5" cy="47.3" rx="8.6" ry="7.1" fill="#5a3b3c" transform="rotate(-34 175.5 47.3)"/><ellipse cx="203.7" cy="42.3" rx="11.2" ry="9.6" fill="#8b5340" transform="rotate(-50 203.7 42.3)"/><ellipse cx="227.2" cy="47.5" rx="8.8" ry="7.9" fill="#5a3b3c" transform="rotate(-41 227.2 47.5)"/><ellipse cx="246.8" cy="46.8" rx="10.7" ry="9.0" fill="#8b5340" transform="rotate(-20 246.8 46.8)"/><ellipse cx="272.2" cy="47.5" rx="10.2" ry="8.5" fill="#5a3b3c" transform="rotate(20 272.2 47.5)"/><ellipse cx="299.2" cy="42.7" rx="10.1" ry="8.9" fill="#8b5340" transform="rotate(18 299.2 42.7)"/><ellipse cx="319.2" cy="42.9" rx="9.3" ry="7.3" fill="#5a3b3c" transform="rotate(-47 319.2 42.9)"/><ellipse cx="17.3" cy="62.1" rx="9.3" ry="6.7" fill="#5a3b3c" transform="rotate(-8 17.3 62.1)"/><ellipse cx="46.5" cy="64.5" rx="11.0" ry="9.4" fill="#5a3b3c" transform="rotate(-13 46.5 64.5)"/><ellipse cx="71.3" cy="62.2" rx="9.7" ry="7.6" fill="#8b5340" transform="rotate(-1 71.3 62.2)"/><ellipse cx="90.1" cy="66.7" rx="8.5" ry="6.0" fill="#5a3b3c" transform="rotate(-17 90.1 66.7)"/><ellipse cx="114.2" cy="63.4" rx="11.4" ry="10.3" fill="#5a3b3c" transform="rotate(-3 114.2 63.4)"/><ellipse cx="139.3" cy="68.0" rx="10.0" ry="7.5" fill="#5a3b3c" transform="rotate(9 139.3 68.0)"/><ellipse cx="164.6" cy="67.7" rx="10.8" ry="9.3" fill="#5a3b3c" transform="rotate(-26 164.6 67.7)"/><ellipse cx="184.2" cy="67.4" rx="10.0" ry="7.3" fill="#5a3b3c" transform="rotate(-50 184.2 67.4)"/><ellipse cx="212.7" cy="63.8" rx="10.0" ry="8.1" fill="#5a3b3c" transform="rotate(-43 212.7 63.8)"/><ellipse cx="233.7" cy="66.5" rx="9.8" ry="8.9" fill="#5a3b3c" transform="rotate(-48 233.7 66.5)"/><ellipse cx="262.2" cy="66.1" rx="10.4" ry="8.7" fill="#5a3b3c" transform="rotate(43 262.2 66.1)"/><ellipse cx="284.0" cy="67.6" rx="10.0" ry="8.3" fill="#5a3b3c" transform="rotate(-19 284.0 67.6)"/><ellipse cx="306.5" cy="65.0" rx="11.2" ry="10.1" fill="#5a3b3c" transform="rotate(33 306.5 65.0)"/><ellipse cx="29.8" cy="82.3" rx="9.8" ry="8.8" fill="#5a3b3c" transform="rotate(44 29.8 82.3)"/><ellipse cx="52.1" cy="84.2" rx="9.9" ry="7.7" fill="#8b5340" transform="rotate(-33 52.1 84.2)"/><ellipse cx="81.5" cy="86.3" rx="10.3" ry="7.8" fill="#5a3b3c" transform="rotate(-33 81.5 86.3)"/><ellipse cx="101.0" cy="83.1" rx="10.1" ry="7.4" fill="#8b5340" transform="rotate(44 101.0 83.1)"/><ellipse cx="128.1" cy="86.7" rx="9.6" ry="8.5" fill="#5a3b3c" transform="rotate(13 128.1 86.7)"/><ellipse cx="154.4" cy="85.1" rx="11.1" ry="9.0" fill="#8b5340" transform="rotate(-15 154.4 85.1)"/><ellipse cx="174.7" cy="86.0" rx="10.6" ry="8.3" fill="#5a3b3c" transform="rotate(-41 174.7 86.0)"/><ellipse cx="202.1" cy="87.6" rx="11.3" ry="8.0" fill="#5a3b3c" transform="rotate(41 202.1 87.6)"/><ellipse cx="223.6" cy="84.5" rx="10.7" ry="7.7" fill="#5a3b3c" transform="rotate(-23 223.6 84.5)"/><ellipse cx="244.0" cy="85.2" rx="11.0" ry="9.0" fill="#5a3b3c" transform="rotate(5 244.0 85.2)"/><ellipse cx="275.5" cy="83.8" rx="11.4" ry="8.2" fill="#8b5340" transform="rotate(-36 275.5 83.8)"/><ellipse cx="297.2" cy="87.7" rx="10.4" ry="8.0" fill="#5a3b3c" transform="rotate(-48 297.2 87.7)"/><ellipse cx="317.3" cy="83.1" rx="9.8" ry="9.0" fill="#8b5340" transform="rotate(-28 317.3 83.1)"/><ellipse cx="21.3" cy="106.3" rx="10.9" ry="9.7" fill="#5a3b3c" transform="rotate(-31 21.3 106.3)"/><ellipse cx="40.9" cy="104.1" rx="11.0" ry="9.6" fill="#8b5340" transform="rotate(45 40.9 104.1)"/><ellipse cx="65.4" cy="106.2" rx="9.8" ry="7.4" fill="#5a3b3c" transform="rotate(-14 65.4 106.2)"/><ellipse cx="94.4" cy="106.3" rx="9.3" ry="8.1" fill="#5a3b3c" transform="rotate(-23 94.4 106.3)"/><ellipse cx="112.8" cy="105.9" rx="11.1" ry="10.1" fill="#8b5340" transform="rotate(-18 112.8 105.9)"/><ellipse cx="137.2" cy="108.0" rx="8.8" ry="7.1" fill="#5a3b3c" transform="rotate(26 137.2 108.0)"/><ellipse cx="160.8" cy="106.2" rx="9.8" ry="8.4" fill="#5a3b3c" transform="rotate(-21 160.8 106.2)"/><ellipse cx="187.8" cy="107.0" rx="10.6" ry="8.6" fill="#8b5340" transform="rotate(39 187.8 107.0)"/><ellipse cx="208.8" cy="106.8" rx="9.8" ry="7.8" fill="#5a3b3c" transform="rotate(-33 208.8 106.8)"/><ellipse cx="237.6" cy="105.8" rx="9.5" ry="7.6" fill="#8b5340" transform="rotate(5 237.6 105.8)"/><ellipse cx="256.2" cy="104.2" rx="10.7" ry="7.8" fill="#5a3b3c" transform="rotate(44 256.2 104.2)"/><ellipse cx="281.3" cy="103.0" rx="8.7" ry="7.9" fill="#5a3b3c" transform="rotate(5 281.3 103.0)"/><ellipse cx="310.2" cy="105.0" rx="11.0" ry="9.2" fill="#5a3b3c" transform="rotate(-2 310.2 105.0)"/><ellipse cx="34.4" cy="124.4" rx="11.2" ry="8.9" fill="#5a3b3c" transform="rotate(-40 34.4 124.4)"/><ellipse cx="56.4" cy="124.4" rx="10.3" ry="8.5" fill="#5a3b3c" transform="rotate(50 56.4 124.4)"/><ellipse cx="79.7" cy="122.6" rx="10.0" ry="8.0" fill="#5a3b3c" transform="rotate(-32 79.7 122.6)"/><ellipse cx="107.1" cy="125.3" rx="9.1" ry="6.8" fill="#5a3b3c" transform="rotate(5 107.1 125.3)"/><ellipse cx="124.4" cy="123.6" rx="10.8" ry="8.0" fill="#5a3b3c" transform="rotate(8 124.4 123.6)"/><ellipse cx="151.2" cy="125.7" rx="9.1" ry="7.9" fill="#5a3b3c" transform="rotate(0 151.2 125.7)"/><ellipse cx="172.5" cy="124.4" rx="10.7" ry="8.8" fill="#5a3b3c" transform="rotate(4 172.5 124.4)"/><ellipse cx="197.6" cy="122.2" rx="10.1" ry="8.6" fill="#8b5340" transform="rotate(0 197.6 122.2)"/><ellipse cx="223.2" cy="127.2" rx="11.4" ry="8.2" fill="#8b5340" transform="rotate(12 223.2 127.2)"/><ellipse cx="248.7" cy="124.7" rx="10.0" ry="8.1" fill="#5a3b3c" transform="rotate(-43 248.7 124.7)"/><ellipse cx="273.7" cy="124.9" rx="10.7" ry="7.5" fill="#8b5340" transform="rotate(39 273.7 124.9)"/><ellipse cx="299.5" cy="127.2" rx="8.6" ry="7.6" fill="#5a3b3c" transform="rotate(-25 299.5 127.2)"/><ellipse cx="318.2" cy="126.8" rx="8.9" ry="6.6" fill="#5a3b3c" transform="rotate(42 318.2 126.8)"/></g><g transform="scale(0.988 0.750)"><path d="M6.0 8.0 C39.2 4.0 306.2 5.4 340.0 8.0 C373.8 10.6 344.0 29.4 344.0 34.0 C344.0 38.6 341.6 52.2 340.0 54.0 C338.4 55.8 330.2 52.8 328.0 52.0 C325.8 51.2 320.8 47.8 318.0 46.0 C315.2 44.2 303.4 34.4 300.0 34.0 C296.6 33.6 287.4 41.4 284.0 42.0 C280.6 42.6 269.4 39.2 266.0 40.0 C262.6 40.8 253.4 49.6 250.0 50.0 C246.6 50.4 235.6 45.8 232.0 44.0 C228.4 42.2 217.6 32.2 214.0 32.0 C210.4 31.8 199.8 40.2 196.0 42.0 C192.2 43.8 180.0 50.2 176.0 50.0 C172.0 49.8 160.0 40.8 156.0 40.0 C152.0 39.2 139.8 41.0 136.0 42.0 C132.2 43.0 121.6 50.4 118.0 50.0 C114.4 49.6 103.4 38.6 100.0 38.0 C96.6 37.4 87.0 44.2 84.0 44.0 C81.0 43.8 73.0 35.4 70.0 36.0 C67.0 36.6 57.4 48.0 54.0 50.0 C50.6 52.0 39.6 55.0 36.0 56.0 C32.4 57.0 20.8 60.8 18.0 60.0 C15.2 59.2 9.2 53.2 8.0 48.0 C6.8 42.8 -27.2 12.0 6.0 8.0 Z" fill="#25b676"/><path d="M0.0 4.0 C0.8 0.4 -21.6 0.4 12.0 0.0 C45.6 -0.4 302.6 -0.6 336.0 0.0 C369.4 0.6 345.4 3.8 346.0 6.0 C346.6 8.2 342.2 18.6 342.0 22.0 C341.8 25.4 344.4 36.6 344.0 40.0 C343.6 43.4 339.6 56.2 338.0 56.0 C336.4 55.8 329.6 41.8 328.0 38.0 C326.4 34.2 324.8 20.5 322.0 18.0 C319.2 15.5 304.2 13.2 300.0 13.0 C295.8 12.8 285.0 16.1 280.0 16.0 C275.0 15.9 256.0 12.1 250.0 12.0 C244.0 11.9 226.0 15.1 220.0 15.0 C214.0 14.9 196.0 11.1 190.0 11.0 C184.0 10.9 166.0 13.9 160.0 14.0 C154.0 14.1 136.0 11.9 130.0 12.0 C124.0 12.1 106.0 15.1 100.0 15.0 C94.0 14.9 76.0 11.1 70.0 11.0 C64.0 10.9 44.8 13.1 40.0 14.0 C35.2 14.9 24.2 17.4 22.0 20.0 C19.8 22.6 19.2 36.2 18.0 40.0 C16.8 43.8 11.4 58.4 10.0 58.0 C8.6 57.6 5.0 41.4 4.0 36.0 C3.0 30.6 -0.8 7.6 0.0 4.0 Z" fill="#7ed2a9"/></g><g transform="scale(0.988 1)"><path d="M4.0 2.0 Q6.0 2.0 8.0 -4.0 Q10.0 2.0 12.0 2.0 Z" fill="#7ed2a9"/><path d="M16.0 2.0 Q26.0 -3.0 28.0 -9.0 Q30.0 -3.0 40.0 2.0 Z" fill="#7ed2a9"/><path d="M148.0 2.0 Q160.0 -2.0 162.0 -8.0 Q164.0 -2.0 176.0 2.0 Z" fill="#7ed2a9"/><path d="M218.0 2.0 Q228.0 -3.0 230.0 -9.0 Q232.0 -3.0 242.0 2.0 Z" fill="#7ed2a9"/><path d="M330.0 2.0 Q334.0 0.0 336.0 -6.0 Q338.0 0.0 342.0 2.0 Z" fill="#7ed2a9"/></g></g><g fill="none" stroke="#3cc585" stroke-width="2.6"><path d="M1680.0 1040.0 C1692.0 1087.2 1708.0 1089.0 1720.0 1035.0"/></g>
<clipPath id="cc"><rect x="536" y="900" width="1608" height="204"/></clipPath>
<g fill="#ffffff" clip-path="url(#cc)"><ellipse cx="563.0" cy="1104.0" rx="25.0" ry="34.0"/><ellipse cx="614.0" cy="1104.0" rx="25.0" ry="36.0"/><ellipse cx="723.0" cy="1104.0" rx="30.0" ry="56.0"/><ellipse cx="779.0" cy="1104.0" rx="30.0" ry="35.0"/><ellipse cx="830.0" cy="1104.0" rx="45.0" ry="19.0"/><path d="M636 1104 L680 1070 L712 1052 L730 1104 Z"/><ellipse cx="1035.0" cy="1104.0" rx="28.0" ry="32.0"/><ellipse cx="1090.0" cy="1104.0" rx="42.0" ry="69.0"/><ellipse cx="1140.0" cy="1104.0" rx="40.0" ry="44.0"/><ellipse cx="1195.0" cy="1104.0" rx="28.0" ry="29.0"/><ellipse cx="1318.0" cy="1104.0" rx="30.0" ry="28.0"/><ellipse cx="1378.0" cy="1104.0" rx="32.0" ry="34.0"/><ellipse cx="1438.0" cy="1104.0" rx="36.0" ry="44.0"/><ellipse cx="1470.0" cy="1104.0" rx="22.0" ry="19.0"/><ellipse cx="1530.0" cy="1104.0" rx="42.0" ry="44.0"/><ellipse cx="1590.0" cy="1104.0" rx="95.0" ry="50.0"/><ellipse cx="1650.0" cy="1104.0" rx="48.0" ry="76.0"/><ellipse cx="1760.0" cy="1104.0" rx="48.0" ry="42.0"/><ellipse cx="1800.0" cy="1104.0" rx="26.0" ry="16.0"/><ellipse cx="1870.0" cy="1104.0" rx="28.0" ry="29.0"/><ellipse cx="1915.0" cy="1104.0" rx="25.0" ry="36.0"/><ellipse cx="1960.0" cy="1104.0" rx="40.0" ry="34.0"/><ellipse cx="2016.0" cy="1104.0" rx="55.0" ry="57.0"/><ellipse cx="2080.0" cy="1104.0" rx="35.0" ry="36.0"/><ellipse cx="2130.0" cy="1104.0" rx="40.0" ry="26.0"/></g>
<rect x="536" y="1168" width="1608" height="29" fill="#0b161a"/>
<g>
 <rect x="1234" y="660" width="16" height="262" fill="#e8a274"/>
 <rect x="1234" y="660" width="4" height="262" fill="#d08a60"/>
 <rect x="1304" y="660" width="16" height="262" fill="#e8a274"/>
 <rect x="1304" y="660" width="4" height="262" fill="#d08a60"/>
 <g fill="#e8a274"><rect x="1249" y="677" width="56" height="16"/><rect x="1249" y="744" width="56" height="16"/><rect x="1249" y="810" width="56" height="16"/><rect x="1249" y="870" width="56" height="16"/></g>
 <rect x="1228" y="636" width="98" height="26" fill="#c0041f"/>
 <rect x="1228" y="636" width="21" height="26" fill="#f02436"/>
 <rect x="1305" y="636" width="21" height="26" fill="#f02436"/>
</g>
<circle cx="1572.5" cy="426" r="98.5" fill="#d7edf1"/>
<g><ellipse cx="1080.0" cy="468.0" rx="18" ry="22.5" fill="#f2b53a"/><ellipse cx="1078.0" cy="468.0" rx="15.5" ry="21.5" fill="#fceb72"/><ellipse cx="1075.0" cy="466.0" rx="8" ry="16" fill="#fff49a" fill-opacity="0.6"/><rect x="1073.5" y="459.5" width="5" height="17" rx="2.5" fill="#f0a830"/></g>
<g><ellipse cx="1460.0" cy="474.0" rx="18" ry="22.5" fill="#f2b53a"/><ellipse cx="1458.0" cy="474.0" rx="15.5" ry="21.5" fill="#fceb72"/><ellipse cx="1455.0" cy="472.0" rx="8" ry="16" fill="#fff49a" fill-opacity="0.6"/><rect x="1453.5" y="465.5" width="5" height="17" rx="2.5" fill="#f0a830"/></g>
<g><ellipse cx="1622.0" cy="474.0" rx="18" ry="22.5" fill="#f2b53a"/><ellipse cx="1620.0" cy="474.0" rx="15.5" ry="21.5" fill="#fceb72"/><ellipse cx="1617.0" cy="472.0" rx="8" ry="16" fill="#fff49a" fill-opacity="0.6"/><rect x="1615.5" y="465.5" width="5" height="17" rx="2.5" fill="#f0a830"/></g>
<g><ellipse cx="1786.0" cy="474.0" rx="18" ry="22.5" fill="#f2b53a"/><ellipse cx="1784.0" cy="474.0" rx="15.5" ry="21.5" fill="#fceb72"/><ellipse cx="1781.0" cy="472.0" rx="8" ry="16" fill="#fff49a" fill-opacity="0.6"/><rect x="1779.5" y="465.5" width="5" height="17" rx="2.5" fill="#f0a830"/></g>
<g><ellipse cx="2130.0" cy="517.0" rx="18" ry="22.5" fill="#f2b53a"/><ellipse cx="2128.0" cy="517.0" rx="15.5" ry="21.5" fill="#fceb72"/><ellipse cx="2125.0" cy="515.0" rx="8" ry="16" fill="#fff49a" fill-opacity="0.6"/><rect x="2123.5" y="508.5" width="5" height="17" rx="2.5" fill="#f0a830"/></g>
<g fill="none" stroke="#8d8b88" stroke-width="3"><path d="M1089.0 852.0 C1111.0 825.0 1159.0 825.0 1181.0 852.0 C1159.0 879.0 1111.0 879.0 1089.0 852.0 Z"/><path d="M1117.0 871.0 C1118.0 849.0 1152.0 849.0 1153.0 871.0"/></g>
<g fill="none" stroke="#8d8b88" stroke-width="3"><path d="M1911.0 792.0 C1933.0 765.0 1981.0 765.0 2003.0 792.0 C1981.0 819.0 1933.0 819.0 1911.0 792.0 Z"/><path d="M1939.0 811.0 C1940.0 789.0 1974.0 789.0 1975.0 811.0"/></g>
<g>
 <linearGradient id="plg" x1="0" y1="0" x2="0" y2="1"><stop offset="0" stop-color="#f46a62"/><stop offset="1" stop-color="#dc4636"/></linearGradient>
 <path d="M838 702 C834 670 834 640 838 628 C842 612 856 610 866 610 C884 611 891 622 891 642 C892 668 890 690 884 702 Z" fill="url(#plg)"/>
 <path d="M840 694 C836 700 834 708 838 713 C846 714 852 708 856 700 Z M870 698 C870 706 872 712 878 712 C884 712 885 704 884 696 Z" fill="#e04a3a"/>
 <ellipse cx="858" cy="671" rx="7" ry="6" fill="#f58a80" fill-opacity="0.55"/>
 <path d="M861 645 C868 638 880 636 890 638 C896 640 900 644 901 645 C898 650 890 654 880 654 C872 654 866 651 861 645 Z" fill="#ffffff"/>
 <circle cx="884" cy="645" r="10.5" fill="#050505"/>
</g>
<g>
 <rect x="1001" y="629" width="146" height="100" fill="#2c2653" stroke="#6e64d8" stroke-width="2"/>
 <path d="M1006 670 C1020 664 1040 668 1052 676 L1050 700 C1030 700 1012 690 1006 670 Z" fill="#5d98cf"/>
 <path d="M1142 670 C1128 664 1108 668 1096 676 L1098 700 C1118 700 1136 690 1142 670 Z" fill="#5d98cf"/>
 <g stroke="#c0306a" stroke-width="2.2" fill="none"><path d="M1062 704 L1052 712 L1056 718"/><path d="M1086 704 L1096 712 L1092 718"/><path d="M1068 708 L1062 716 L1066 722"/><path d="M1080 708 L1086 716 L1082 722"/></g>
 <ellipse cx="1074.5" cy="687" rx="29" ry="23" fill="#2d2c8e"/>
 <path d="M1068 705 Q1074 724 1080 705 Z" fill="#2d2c8e"/>
 <path d="M1055 683 C1065 684 1084 684 1094 680 C1092 696 1084 704 1074 704 C1064 704 1057 696 1055 683 Z" fill="#e6e4f6"/>
 <path d="M1069 684 L1079 684 L1074 698 Z" fill="#101028"/>
</g>
<ellipse cx="1722" cy="972" rx="26" ry="24" fill="#5e4e9e"/>
<g>
 <linearGradient id="slg" x1="0" y1="0" x2="0" y2="1"><stop offset="0" stop-color="#4a90d8"/><stop offset="1" stop-color="#1650b8"/></linearGradient>
 <linearGradient id="hrn" x1="0" y1="0" x2="0" y2="1"><stop offset="0" stop-color="#d81a60"/><stop offset="1" stop-color="#a03a98"/></linearGradient>
 <path d="M1658 1011 C1664 978 1668 950 1690 945 C1709 948 1714 975 1712 1000 C1704 1013 1680 1012 1658 1011 Z" fill="url(#slg)"/>
 <path d="M1686 956 C1682 938 1688 922 1698 913 C1700 926 1698 940 1705 956 Z" fill="url(#hrn)"/>
 <path d="M1667 979 C1680 977 1694 975 1698 975 C1694 990 1684 998 1670 999 Z" fill="#ffffff"/>
 <path d="M1667 979 L1680 978 C1678 988 1674 994 1670 995 Z" fill="#050505"/>
</g>
<g>
 <ellipse cx="2096" cy="765" rx="32" ry="14" fill="#5aa6c8" transform="rotate(20 2096 765)"/>
 <circle cx="2138" cy="772" r="27" fill="#242672"/>
 <path d="M2120 768 Q2122 786 2140 786 L2146 786 L2146 766 Z" fill="#ffffff"/>
 <path d="M2132 767 L2136 782 L2140 767 Z" fill="#101020"/>
 <g stroke="#c03050" stroke-width="2.5" fill="none"><path d="M2118 788 L2110 796 L2114 800"/><path d="M2126 792 L2122 802 L2128 806"/></g>
</g>
<g fill="#ff0015" fill-opacity="0.684"><rect x="536" y="154" width="1608" height="92"/><rect x="536" y="154" width="172" height="1042"/><rect x="536" y="1100" width="1608" height="96"/></g>
<rect x="535" y="408" width="1220" height="686.5" fill="none" stroke="#94a2a2" stroke-width="2"/>
<circle cx="719" cy="957" r="98" fill="none" stroke="#3c4a55" stroke-width="6"/>
<circle cx="719" cy="957" r="76" fill="#3d4b56"/>
<circle cx="719" cy="957" r="55" fill="url(#joy)"/>
<circle cx="1573" cy="957" r="101" fill="#424242"/>
<circle cx="1573" cy="957" r="87" fill="#393939"/>
<path d="M1573 912 L1618 958 Q1620 968 1610 968 H1596 V1000 Q1596 1004 1592 1004 H1554 Q1550 1004 1550 1000 V968 H1536 Q1526 968 1529 958 Z" fill="#ffffff"/>
<g fill="#e6e6ee" stroke="#5b58d6" stroke-width="1.6"><rect x="971.3" y="599.3" width="19.4" height="19.4"/><rect x="1064.8" y="602.3" width="16.4" height="16.4"/><rect x="1157.3" y="599.3" width="19.4" height="19.4"/><rect x="975.3" y="671.3" width="15.4" height="15.4"/><rect x="1157.3" y="671.3" width="15.4" height="15.4"/><rect x="971.3" y="738.8" width="19.4" height="19.4"/><rect x="1065.3" y="740.3" width="15.4" height="15.4"/><rect x="1157.3" y="738.8" width="19.4" height="19.4"/><circle cx="1073.5" cy="556" r="6.5"/></g>
<path d="M2008 1118 H2108 L2114 1124 V1168 L2108 1174 H2008 L2002 1168 V1124 Z" fill="#4b0e1c"/>
<rect x="2004" y="1166" width="108" height="8" fill="#420812"/>
</svg>
<div class="ptxt" style="left:548px;top:272px;font-size:55px;font-weight:bold;color:#ffffff;transform:scaleX(0.815);transform-origin:0 0">Score: 0</div>
<div class="ptxt" style="left:2006px;top:975px;font-size:31px;color:#dcdcdc;transform:scaleX(0.94);transform-origin:0 0">22;723</div>
</div>
<!-- PANEL -->
<div id="panel" class="a">
  <div class="a" style="left:0;top:0;width:2130px;height:61px;background:#32323b"></div>
  <div class="ptxt" style="left:12px;top:17px;font-size:28px;letter-spacing:1px;color:#f2f2f4">Instances List</div>
  <svg class="a" style="left:2094px;top:23px" width="20" height="20"><g stroke="#ebe6fb" stroke-width="2.6"><line x1="1.5" y1="1.5" x2="18.5" y2="18.5"/><line x1="18.5" y1="1.5" x2="1.5" y2="18.5"/></g></svg>
  <div class="a" style="left:0;top:61px;width:2130px;height:60px;background:#1f2028"></div>
  <div class="a" style="left:0;top:121px;width:2120px;height:62px;background:#272a33"></div>
  <div class="a" style="left:0;top:183px;width:2120px;height:64px;background:#3c4250"></div>
  <div class="a" style="left:0;top:247px;width:2120px;height:66px;background:#272a33;border-bottom:1px solid #22242b"></div>
  <div class="a" style="left:2120px;top:121px;width:10px;height:190px;background:#22242c"></div>
  <div class="a" style="left:2122px;top:248px;width:8px;height:27px;background:#808080;border-radius:4px 0 0 4px"></div>
  <div class="a" style="left:0;top:313px;width:2130px;height:55px;background:#48484f"></div>
  <div id="hdr" style="color:#dfe3ee;font-weight:bold;font-size:25px">
   <div class="ptxt" style="left:17px;top:77px">Object name</div>
   <div class="ptxt" style="left:849px;top:77px">X</div>
   <div class="ptxt" style="left:1067px;top:77px">Y</div>
   <div class="ptxt" style="left:1285px;top:77px">Angle</div>
   <div class="ptxt" style="left:1503px;top:77px">Layer</div>
   <div class="ptxt" style="left:1919px;top:77px">Z Order</div>
  </div>
  <div style="color:#aeb2bb;font-size:28px">
   <div class="ptxt" style="left:16px;top:138px">Platform3</div>
   <div class="ptxt" style="left:847px;top:138px;letter-spacing:-1px">1047.00</div>
   <div class="ptxt" style="left:1065px;top:138px;letter-spacing:-1px">346.00</div>
   <div class="ptxt" style="left:1283px;top:138px;letter-spacing:-1px">0.00</div>
   <div class="ptxt" style="left:1917px;top:138px;letter-spacing:-1px">3</div>
  </div>
  <div style="color:#dfe3ee;font-size:28px">
   <div class="ptxt" style="left:16px;top:202px">Fly</div>
   <div class="ptxt" style="left:847px;top:202px;letter-spacing:-1px">366.00</div>
   <div class="ptxt" style="left:1065px;top:202px;letter-spacing:-1px">172.00</div>
   <div class="ptxt" style="left:1283px;top:202px;letter-spacing:-1px">0.00</div>
   <div class="ptxt" style="left:1917px;top:202px;letter-spacing:-1px">5</div>
  </div>
  <div style="color:#aeb2bb;font-size:28px">
   <div class="ptxt" style="left:16px;top:266px">Checkpoint</div>
   <div class="ptxt" style="left:847px;top:266px;letter-spacing:-1px">1081.00</div>
   <div class="ptxt" style="left:1065px;top:266px;letter-spacing:-1px">277.00</div>
   <div class="ptxt" style="left:1283px;top:266px;letter-spacing:-1px">0.00</div>
   <div class="ptxt" style="left:1917px;top:266px;letter-spacing:-1px">31</div>
  </div>
  <svg class="a" style="left:0;top:0" width="2130" height="368" viewBox="8 1203 2130 368">
   <g fill="none" stroke="#ebe3fb" stroke-width="3.2">
    <path d="M758.6 1341.6 V1340 Q758.6 1333.4 767 1333.4 Q775.4 1333.4 775.4 1340 V1348"/>
    <rect x="752.6" y="1348.4" width="29" height="24.4" rx="3"/>
    <path d="M758.6 1405.6 V1404 Q758.6 1397.4 767 1397.4 Q775.4 1397.4 775.4 1404 V1412"/>
    <rect x="752.6" y="1412.4" width="29" height="24.4" rx="3"/>
    <path d="M758.6 1469.6 V1468 Q758.6 1461.4 767 1461.4 Q775.4 1461.4 775.4 1468 V1476"/>
    <rect x="752.6" y="1476.4" width="29" height="24.4" rx="3"/>
   </g>
   <g fill="#ebe3fb"><circle cx="767" cy="1360.4" r="3.4"/><circle cx="767" cy="1424.4" r="3.4"/><circle cx="767" cy="1488.4" r="3.4"/></g>
   <g fill="none" stroke="#9aa0aa" stroke-width="3.2" stroke-linecap="round">
    <circle cx="42" cy="1542" r="12.6"/><path d="M51.4 1551.4 L58.4 1558.4"/>
   </g>
  </svg>
  <div class="ptxt" style="left:82px;top:327px;font-size:32px;color:#8c8e97">Search instances</div>
</div>
</body></html>
